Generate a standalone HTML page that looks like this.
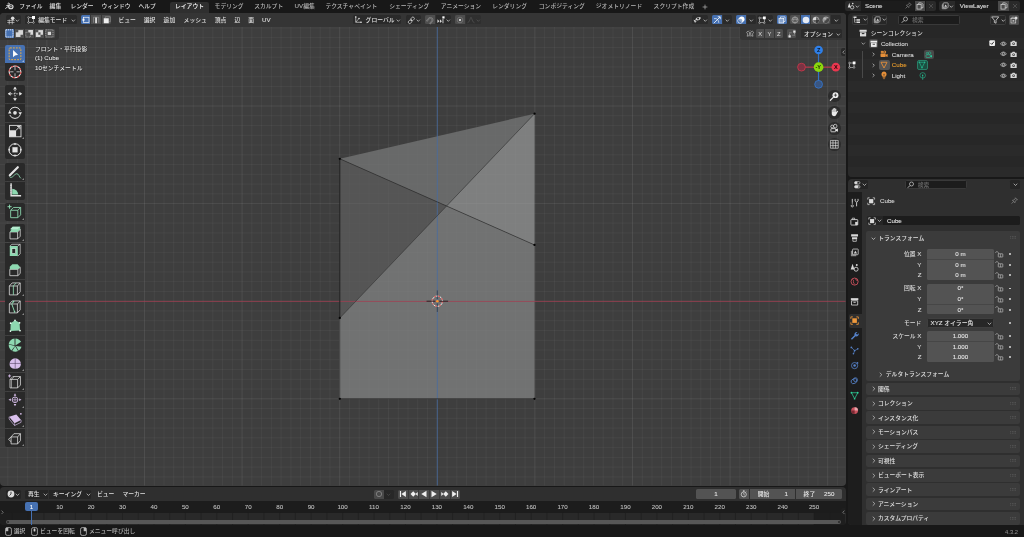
<!DOCTYPE html><html lang="ja"><head><meta charset="utf-8"><title>Blender</title><style>
*{box-sizing:border-box;margin:0;padding:0}
html,body{width:1024px;height:537px;overflow:hidden;background:#181818}
body{position:relative;font-family:"Liberation Sans","Noto Sans CJK JP",sans-serif;font-size:5.8px;color:#e0e0e0;line-height:1;font-weight:500}
.a{position:absolute}
.t{position:absolute;white-space:nowrap;line-height:8px;height:8px}
.l{font-size:6.2px;-webkit-text-stroke:0.08px currentColor}
.btn{position:absolute;background:#282828;border-radius:1.5px}
.fld{position:absolute;background:#545454;border-radius:1.5px;text-align:center;line-height:9px;color:#e6e6e6}
svg{position:absolute;overflow:visible}
</style></head><body><div id="root" class="a" style="left:0;top:0;width:1024px;height:537px;will-change:transform;opacity:0.9999">
<div class="a" id="vp" style="left:0px;top:13px;width:845.5px;height:472.5px;background:#3f3f3f;border-radius:4px;overflow:hidden">
<svg width="845.5" height="472.5" viewBox="0 13 845.5 472.5" style="left:0;top:0"><path d="M7.86 13V485.5M17.62 13V485.5M27.38 13V485.5M37.14 13V485.5M56.66 13V485.5M66.42 13V485.5M76.18 13V485.5M85.94 13V485.5M95.70 13V485.5M105.46 13V485.5M115.22 13V485.5M124.98 13V485.5M134.74 13V485.5M154.26 13V485.5M164.02 13V485.5M173.78 13V485.5M183.54 13V485.5M193.30 13V485.5M203.06 13V485.5M212.82 13V485.5M222.58 13V485.5M232.34 13V485.5M251.86 13V485.5M261.62 13V485.5M271.38 13V485.5M281.14 13V485.5M290.90 13V485.5M300.66 13V485.5M310.42 13V485.5M320.18 13V485.5M329.94 13V485.5M349.46 13V485.5M359.22 13V485.5M368.98 13V485.5M378.74 13V485.5M388.50 13V485.5M398.26 13V485.5M408.02 13V485.5M417.78 13V485.5M427.54 13V485.5M447.06 13V485.5M456.82 13V485.5M466.58 13V485.5M476.34 13V485.5M486.10 13V485.5M495.86 13V485.5M505.62 13V485.5M515.38 13V485.5M525.14 13V485.5M544.66 13V485.5M554.42 13V485.5M564.18 13V485.5M573.94 13V485.5M583.70 13V485.5M593.46 13V485.5M603.22 13V485.5M612.98 13V485.5M622.74 13V485.5M642.26 13V485.5M652.02 13V485.5M661.78 13V485.5M671.54 13V485.5M681.30 13V485.5M691.06 13V485.5M700.82 13V485.5M710.58 13V485.5M720.34 13V485.5M739.86 13V485.5M749.62 13V485.5M759.38 13V485.5M769.14 13V485.5M778.90 13V485.5M788.66 13V485.5M798.42 13V485.5M808.18 13V485.5M817.94 13V485.5M837.46 13V485.5M0 18.16H845.5M0 27.92H845.5M0 37.68H845.5M0 47.44H845.5M0 57.20H845.5M0 66.96H845.5M0 76.72H845.5M0 86.48H845.5M0 96.24H845.5M0 115.76H845.5M0 125.52H845.5M0 135.28H845.5M0 145.04H845.5M0 154.80H845.5M0 164.56H845.5M0 174.32H845.5M0 184.08H845.5M0 193.84H845.5M0 213.36H845.5M0 223.12H845.5M0 232.88H845.5M0 242.64H845.5M0 252.40H845.5M0 262.16H845.5M0 271.92H845.5M0 281.68H845.5M0 291.44H845.5M0 310.96H845.5M0 320.72H845.5M0 330.48H845.5M0 340.24H845.5M0 350.00H845.5M0 359.76H845.5M0 369.52H845.5M0 379.28H845.5M0 389.04H845.5M0 408.56H845.5M0 418.32H845.5M0 428.08H845.5M0 437.84H845.5M0 447.60H845.5M0 457.36H845.5M0 467.12H845.5M0 476.88H845.5" stroke="#fff" stroke-opacity="0.05" stroke-width="0.85" fill="none"/><path d="M46.90 13V485.5M144.50 13V485.5M242.10 13V485.5M339.70 13V485.5M437.30 13V485.5M534.90 13V485.5M632.50 13V485.5M730.10 13V485.5M827.70 13V485.5M0 106.00H845.5M0 203.60H845.5M0 301.20H845.5M0 398.80H845.5" stroke="#fff" stroke-opacity="0.085" stroke-width="0.95" fill="none"/><polygon points="339.80,158.80 534.60,113.70 446.57,206.02" fill="#696a6a"/><polygon points="339.80,158.80 446.57,206.02 339.80,318.00" fill="#565656"/><polygon points="534.60,113.70 534.50,244.90 446.57,206.02" fill="#7f8080"/><polygon points="339.80,318.00 446.57,206.02 534.50,244.90 534.50,398.80 339.80,398.80" fill="#727373"/><clipPath id="mc"><polygon points="339.80,158.80 534.60,113.70 534.50,244.90 534.50,398.80 339.80,398.80"/></clipPath><g clip-path="url(#mc)"><path d="M7.86 13V485.5M17.62 13V485.5M27.38 13V485.5M37.14 13V485.5M56.66 13V485.5M66.42 13V485.5M76.18 13V485.5M85.94 13V485.5M95.70 13V485.5M105.46 13V485.5M115.22 13V485.5M124.98 13V485.5M134.74 13V485.5M154.26 13V485.5M164.02 13V485.5M173.78 13V485.5M183.54 13V485.5M193.30 13V485.5M203.06 13V485.5M212.82 13V485.5M222.58 13V485.5M232.34 13V485.5M251.86 13V485.5M261.62 13V485.5M271.38 13V485.5M281.14 13V485.5M290.90 13V485.5M300.66 13V485.5M310.42 13V485.5M320.18 13V485.5M329.94 13V485.5M349.46 13V485.5M359.22 13V485.5M368.98 13V485.5M378.74 13V485.5M388.50 13V485.5M398.26 13V485.5M408.02 13V485.5M417.78 13V485.5M427.54 13V485.5M447.06 13V485.5M456.82 13V485.5M466.58 13V485.5M476.34 13V485.5M486.10 13V485.5M495.86 13V485.5M505.62 13V485.5M515.38 13V485.5M525.14 13V485.5M544.66 13V485.5M554.42 13V485.5M564.18 13V485.5M573.94 13V485.5M583.70 13V485.5M593.46 13V485.5M603.22 13V485.5M612.98 13V485.5M622.74 13V485.5M642.26 13V485.5M652.02 13V485.5M661.78 13V485.5M671.54 13V485.5M681.30 13V485.5M691.06 13V485.5M700.82 13V485.5M710.58 13V485.5M720.34 13V485.5M739.86 13V485.5M749.62 13V485.5M759.38 13V485.5M769.14 13V485.5M778.90 13V485.5M788.66 13V485.5M798.42 13V485.5M808.18 13V485.5M817.94 13V485.5M837.46 13V485.5M0 18.16H845.5M0 27.92H845.5M0 37.68H845.5M0 47.44H845.5M0 57.20H845.5M0 66.96H845.5M0 76.72H845.5M0 86.48H845.5M0 96.24H845.5M0 115.76H845.5M0 125.52H845.5M0 135.28H845.5M0 145.04H845.5M0 154.80H845.5M0 164.56H845.5M0 174.32H845.5M0 184.08H845.5M0 193.84H845.5M0 213.36H845.5M0 223.12H845.5M0 232.88H845.5M0 242.64H845.5M0 252.40H845.5M0 262.16H845.5M0 271.92H845.5M0 281.68H845.5M0 291.44H845.5M0 310.96H845.5M0 320.72H845.5M0 330.48H845.5M0 340.24H845.5M0 350.00H845.5M0 359.76H845.5M0 369.52H845.5M0 379.28H845.5M0 389.04H845.5M0 408.56H845.5M0 418.32H845.5M0 428.08H845.5M0 437.84H845.5M0 447.60H845.5M0 457.36H845.5M0 467.12H845.5M0 476.88H845.5" stroke="#fff" stroke-opacity="0.028" stroke-width="0.85" fill="none"/><path d="M46.90 13V485.5M144.50 13V485.5M242.10 13V485.5M339.70 13V485.5M437.30 13V485.5M534.90 13V485.5M632.50 13V485.5M730.10 13V485.5M827.70 13V485.5M0 106.00H845.5M0 203.60H845.5M0 301.20H845.5M0 398.80H845.5" stroke="#fff" stroke-opacity="0.05" stroke-width="0.95" fill="none"/></g><path d="M0 301.40H845.5" stroke="#a03c50" stroke-opacity="0.85" stroke-width="0.9"/><path d="M437.30 13V485.5" stroke="#456aa2" stroke-opacity="0.85" stroke-width="0.9"/><path d="M339.80,158.80L534.50,244.90" stroke="#222" stroke-width="0.55" fill="none"/><path d="M339.80,318.00L534.60,113.70" stroke="#333" stroke-width="0.55" fill="none"/><path d="M339.80,158.80L339.80,318.00" stroke="#1a1a1a" stroke-width="0.9" fill="none"/><path d="M339.80,318.00L339.80,398.80" stroke="#484848" stroke-width="0.9" fill="none"/><path d="M339.80,398.80L534.50,398.80" stroke="#333" stroke-width="0.9" fill="none"/><circle cx="339.80" cy="158.80" r="1.15" fill="#050505"/><circle cx="534.60" cy="113.70" r="1.15" fill="#050505"/><circle cx="534.50" cy="244.90" r="1.15" fill="#050505"/><circle cx="339.80" cy="318.00" r="1.15" fill="#050505"/><circle cx="339.80" cy="398.80" r="1.15" fill="#050505"/><circle cx="534.50" cy="398.80" r="1.15" fill="#050505"/><circle cx="437.3" cy="301.2" r="5.2" fill="none" stroke="#e8e8e8" stroke-width="1"/><circle cx="437.3" cy="301.2" r="5.2" fill="none" stroke="#e04848" stroke-width="1" stroke-dasharray="2.042 2.042"/><path d="M426.55 301.2h8.6M439.45 301.2h8.6" stroke="#151515" stroke-width="0.8"/><path d="M437.3 290.45v8.6M437.3 303.34999999999997v8.6" stroke="#151515" stroke-opacity="0.6" stroke-width="0.8"/><circle cx="437.3" cy="301.2" r="1.25" fill="#ff9a2e"/></svg>
<div class="a" style="left:0;top:0;width:100%;height:13.8px;background:#363636"></div>
<div class="a" style="left:0;top:13.8px;width:59.4px;height:13.3px;background:#363636;border-bottom-right-radius:3px"></div>
<div class="a" style="left:740px;top:13.8px;width:106px;height:13px;background:#363636;border-bottom-left-radius:3px"></div>
</div>
<div class="a" style="left:6.2px;top:15.2px;width:14.50px;height:9.30px;background:#2b2b2b;border-radius:1.5px;"></div>
<svg width="8.6" height="8.6" viewBox="0 0 16 16" style="left:7.4px;top:15.6px"><path d="M0.5 8.6H14M0.5 12.2H14M4.2 6.6V15.5M9.8 8V15.5" stroke="#dcdcdc" stroke-width="1.2" fill="none"/><circle cx="10.6" cy="4.4" r="3.3" fill="#dcdcdc"/></svg>
<svg width="4.6" height="3.2" viewBox="0 0 10 7" style="left:15.30px;top:18.60px"><path d="M1.4 1.4L5 5.2L8.6 1.4" stroke="#d0d0d0" stroke-width="1.6" fill="none"/></svg>
<div class="a" style="left:25.4px;top:15.2px;width:51.20px;height:9.30px;background:#2b2b2b;border-radius:1.5px;"></div>
<svg width="8" height="8" viewBox="0 0 16 16" style="left:27.2px;top:16px"><rect x="3" y="3" width="10" height="10" fill="none" stroke="#dcdcdc" stroke-width="1.1"/><circle cx="3" cy="3" r="1.7" fill="#2b2b2b" stroke="#dcdcdc" stroke-width="1"/><circle cx="3" cy="13" r="1.7" fill="#2b2b2b" stroke="#dcdcdc" stroke-width="1"/><circle cx="13" cy="13" r="1.7" fill="#2b2b2b" stroke="#dcdcdc" stroke-width="1"/><rect x="10" y="0" width="6" height="6" fill="#fff"/></svg>
<div class="t" style="left:38.2px;top:16.0px;">編集モード</div>
<svg width="4.6" height="3.2" viewBox="0 0 10 7" style="left:70.90px;top:18.60px"><path d="M1.4 1.4L5 5.2L8.6 1.4" stroke="#d0d0d0" stroke-width="1.6" fill="none"/></svg>
<div class="a" style="left:80.6px;top:15.2px;width:9.80px;height:9.30px;background:#4772b3;border-radius:1.5px 0 0 1.5px;"></div>
<div class="a" style="left:91px;top:15.2px;width:10.00px;height:9.30px;background:#4f4f4f;border-radius:0;"></div>
<div class="a" style="left:101.6px;top:15.2px;width:9.80px;height:9.30px;background:#4f4f4f;border-radius:0 1.5px 1.5px 0;"></div>
<svg width="8" height="8" viewBox="0 0 16 16" style="left:81.5px;top:16px"><rect x="3" y="2.5" width="11" height="10.5" fill="none" stroke="#fff" stroke-width="1.3"/><rect x="1" y="5.5" width="4" height="4" fill="#fff"/></svg>
<svg width="8" height="8" viewBox="0 0 16 16" style="left:92px;top:16px"><path d="M3 13.5V2.5H13.5V13.5" fill="none" stroke="#9a9a9a" stroke-width="1.2"/><rect x="6.6" y="3" width="3" height="11.5" fill="#fff"/></svg>
<svg width="8" height="8" viewBox="0 0 16 16" style="left:102.5px;top:16px"><path d="M4.5 4.5V1.5H14.5V11.5H11.5" fill="none" stroke="#9a9a9a" stroke-width="1.2"/><rect x="1.5" y="4.5" width="10" height="10" fill="#f0f0f0"/></svg>
<div class="t" style="left:118.4px;top:16.0px;color:#e0e0e0;">ビュー</div>
<div class="t" style="left:143.8px;top:16.0px;color:#e0e0e0;">選択</div>
<div class="t" style="left:163.6px;top:16.0px;color:#e0e0e0;">追加</div>
<div class="t" style="left:183.6px;top:16.0px;color:#e0e0e0;">メッシュ</div>
<div class="t" style="left:214.8px;top:16.0px;color:#e0e0e0;">頂点</div>
<div class="t" style="left:234.6px;top:16.0px;color:#e0e0e0;">辺</div>
<div class="t" style="left:248.2px;top:16.0px;color:#e0e0e0;">面</div>
<div class="t" style="left:262px;top:16.0px;color:#e0e0e0;"><span class="l">UV</span></div>
<div class="a" style="left:352.5px;top:15.2px;width:48.70px;height:9.30px;background:#2b2b2b;border-radius:1.5px;"></div>
<svg width="8" height="8" viewBox="0 0 16 16" style="left:354.2px;top:16px"><path d="M3.5 1V12.5H15" fill="none" stroke="#dcdcdc" stroke-width="1.4"/><path d="M3.5 12.5L10 5" stroke="#dcdcdc" stroke-width="1.2"/><circle cx="3.5" cy="2" r="1.6" fill="#dcdcdc"/><circle cx="14" cy="12.5" r="1.6" fill="#dcdcdc"/><circle cx="10" cy="5" r="1.6" fill="#dcdcdc"/></svg>
<div class="t" style="left:365.6px;top:16.0px;">グローバル</div>
<svg width="4.6" height="3.2" viewBox="0 0 10 7" style="left:396.10px;top:18.60px"><path d="M1.4 1.4L5 5.2L8.6 1.4" stroke="#d0d0d0" stroke-width="1.6" fill="none"/></svg>
<div class="a" style="left:405.5px;top:15.2px;width:15.50px;height:9.30px;background:#2b2b2b;border-radius:1.5px;"></div>
<svg width="8.6" height="8.6" viewBox="0 0 16 16" style="left:406.8px;top:15.8px"><rect x="6.9" y="2.5" width="7" height="5.4" rx="2.7" transform="rotate(-45 10.4 5.2)" fill="none" stroke="#dcdcdc" stroke-width="1.3"/><rect x="2.1" y="8.1" width="7" height="5.4" rx="2.7" transform="rotate(-45 5.6 10.8)" fill="none" stroke="#dcdcdc" stroke-width="1.3"/><circle cx="8" cy="8" r="1.3" fill="#dcdcdc"/></svg>
<svg width="4.6" height="3.2" viewBox="0 0 10 7" style="left:416.30px;top:18.60px"><path d="M1.4 1.4L5 5.2L8.6 1.4" stroke="#d0d0d0" stroke-width="1.6" fill="none"/></svg>
<div class="a" style="left:425px;top:15.2px;width:10.20px;height:9.30px;background:#4f4f4f;border-radius:1.5px 0 0 1.5px;"></div>
<svg width="8.4" height="8.4" viewBox="0 0 16 16" style="left:426px;top:15.8px"><g transform="rotate(40 8 8)"><path d="M4 14V7.5A4 4 0 0 1 12 7.5V14" fill="none" stroke="#8a8a8a" stroke-width="3"/><path d="M4 13.4V7.5A4 4 0 0 1 12 7.5V13.4" fill="none" stroke="#4f4f4f" stroke-width="1"/></g></svg>
<div class="a" style="left:435.5px;top:15.2px;width:15.80px;height:9.30px;background:#2b2b2b;border-radius:0 1.5px 1.5px 0;"></div>
<svg width="8.4" height="8.4" viewBox="0 0 16 16" style="left:436.6px;top:15.8px"><path d="M0.8 6.4L4.6 9.8L0.8 13.2ZM5.6 6.4L9.4 9.8L5.6 13.2Z" fill="#dcdcdc"/><path d="M11.4 5.8V13.8" stroke="#dcdcdc" stroke-width="1.7"/><rect x="10.2" y="0.6" width="4.2" height="4.2" fill="#fff"/></svg>
<svg width="4.6" height="3.2" viewBox="0 0 10 7" style="left:446.30px;top:18.60px"><path d="M1.4 1.4L5 5.2L8.6 1.4" stroke="#d0d0d0" stroke-width="1.6" fill="none"/></svg>
<div class="a" style="left:455px;top:15.2px;width:10.20px;height:9.30px;background:#4f4f4f;border-radius:1.5px 0 0 1.5px;"></div>
<svg width="8" height="8" viewBox="0 0 16 16" style="left:456.1px;top:16px"><circle cx="8" cy="8" r="5.6" fill="none" stroke="#8c8c8c" stroke-width="1.1"/><circle cx="8" cy="8" r="2.1" fill="#f0f0f0"/></svg>
<div class="a" style="left:465.5px;top:15.2px;width:15.80px;height:9.30px;background:#303030;border-radius:0 1.5px 1.5px 0;"></div>
<svg width="8" height="8" viewBox="0 0 16 16" style="left:466.5px;top:16px"><path d="M1 13.5C5.5 13.5 6.4 2.5 8 2.5S10.5 13.5 15 13.5" fill="none" stroke="#5a5a5a" stroke-width="1.2"/></svg>
<svg width="4.6" height="3.2" viewBox="0 0 10 7" style="left:476.10px;top:18.60px"><path d="M1.4 1.4L5 5.2L8.6 1.4" stroke="#555" stroke-width="1.6" fill="none"/></svg>
<div class="a" style="left:692.3px;top:15.2px;width:15.90px;height:9.30px;background:#2b2b2b;border-radius:1.5px;"></div>
<svg width="8.4" height="8" viewBox="0 0 17 16" style="left:693px;top:16px"><path d="M4 6Q10 -1 16.5 5Q11 12 4 6Z" fill="#dcdcdc" transform="rotate(-12 10 5)"/><circle cx="10.4" cy="4.8" r="2.1" fill="#2b2b2b"/><path d="M1 7.5L8 10.2L5.2 11.4L4.4 14.8Z" fill="#dcdcdc"/></svg>
<svg width="4.6" height="3.2" viewBox="0 0 10 7" style="left:703.10px;top:18.60px"><path d="M1.4 1.4L5 5.2L8.6 1.4" stroke="#d0d0d0" stroke-width="1.6" fill="none"/></svg>
<div class="a" style="left:712.1px;top:15.2px;width:10.20px;height:9.30px;background:#4772b3;border-radius:1.5px 0 0 1.5px;"></div>
<svg width="8" height="8" viewBox="0 0 16 16" style="left:713.2px;top:16px"><path d="M1.5 14.5L14 2" stroke="#fff" stroke-width="1.6"/><path d="M2 5.5C7 4 11 7 11.5 13.5" fill="none" stroke="#fff" stroke-width="1.4"/><path d="M9.5 1.5H14.5V6.5" fill="none" stroke="#fff" stroke-width="1.6"/></svg>
<div class="a" style="left:722.6px;top:15.2px;width:9.20px;height:9.30px;background:#2b2b2b;border-radius:0 1.5px 1.5px 0;"></div>
<svg width="4.6" height="3.2" viewBox="0 0 10 7" style="left:724.80px;top:18.60px"><path d="M1.4 1.4L5 5.2L8.6 1.4" stroke="#d0d0d0" stroke-width="1.6" fill="none"/></svg>
<div class="a" style="left:736px;top:15.2px;width:10.20px;height:9.30px;background:#4772b3;border-radius:1.5px 0 0 1.5px;"></div>
<svg width="8" height="8" viewBox="0 0 16 16" style="left:737px;top:16px"><circle cx="9.5" cy="6.5" r="5.5" fill="#fff"/><circle cx="6.5" cy="9.5" r="5" fill="none" stroke="#fff" stroke-width="1.5"/><circle cx="6.5" cy="9.5" r="4.2" fill="#4772b3" fill-opacity="0.55"/></svg>
<div class="a" style="left:746.5px;top:15.2px;width:9.30px;height:9.30px;background:#2b2b2b;border-radius:0 1.5px 1.5px 0;"></div>
<svg width="4.6" height="3.2" viewBox="0 0 10 7" style="left:748.90px;top:18.60px"><path d="M1.4 1.4L5 5.2L8.6 1.4" stroke="#d0d0d0" stroke-width="1.6" fill="none"/></svg>
<div class="a" style="left:757.1px;top:15.2px;width:15.60px;height:9.30px;background:#2b2b2b;border-radius:1.5px;"></div>
<svg width="8" height="8" viewBox="0 0 16 16" style="left:758px;top:16px"><rect x="3" y="4" width="9.5" height="9.5" fill="none" stroke="#dcdcdc" stroke-width="1.1"/><circle cx="3" cy="4" r="1.7" fill="#2b2b2b" stroke="#dcdcdc" stroke-width="1"/><circle cx="3" cy="13.5" r="1.7" fill="#2b2b2b" stroke="#dcdcdc" stroke-width="1"/><circle cx="12.5" cy="13.5" r="1.7" fill="#2b2b2b" stroke="#dcdcdc" stroke-width="1"/><rect x="10" y="1" width="5.5" height="5.5" fill="#fff"/></svg>
<svg width="4.6" height="3.2" viewBox="0 0 10 7" style="left:768.00px;top:18.60px"><path d="M1.4 1.4L5 5.2L8.6 1.4" stroke="#d0d0d0" stroke-width="1.6" fill="none"/></svg>
<div class="a" style="left:777.1px;top:15.2px;width:9.70px;height:9.30px;background:#4772b3;border-radius:1.5px;"></div>
<svg width="8" height="8" viewBox="0 0 16 16" style="left:778px;top:16px"><path d="M5 4.5V1.8H14.2V11H11.5" fill="none" stroke="#fff" stroke-width="1.3"/><rect x="2" y="4.6" width="9.4" height="9.4" fill="#fff" fill-opacity="0.35" stroke="#fff" stroke-width="1.3"/></svg>
<div class="a" style="left:790.4px;top:15.2px;width:9.90px;height:9.30px;background:#4f4f4f;border-radius:1.5px 0 0 1.5px;"></div>
<div class="a" style="left:800.6px;top:15.2px;width:9.90px;height:9.30px;background:#4772b3;border-radius:0;"></div>
<div class="a" style="left:810.8px;top:15.2px;width:9.80px;height:9.30px;background:#4f4f4f;border-radius:0;"></div>
<div class="a" style="left:820.9px;top:15.2px;width:9.60px;height:9.30px;background:#4f4f4f;border-radius:0 1.5px 1.5px 0;"></div>
<svg width="8" height="8" viewBox="0 0 16 16" style="left:791.4px;top:16px"><circle cx="8" cy="8" r="6.2" fill="none" stroke="#c4c4c4" stroke-width="1.1"/><ellipse cx="8" cy="8" rx="2.6" ry="6.2" fill="none" stroke="#c4c4c4" stroke-width="0.9"/><path d="M2 6.5H14" stroke="#c4c4c4" stroke-width="0.9"/></svg>
<svg width="8" height="8" viewBox="0 0 16 16" style="left:801.5px;top:16px"><circle cx="8" cy="8" r="6.6" fill="#e6ecf6"/></svg>
<svg width="8" height="8" viewBox="0 0 16 16" style="left:811.7px;top:16px"><circle cx="8" cy="8" r="6.2" fill="#6a6a6a" stroke="#c8c8c8" stroke-width="1.1"/><path d="M8 1.8A6.2 6.2 0 0 0 1.8 8H8Z" fill="#d8d8d8"/><path d="M8 8H14.2A6.2 6.2 0 0 1 8 14.2Z" fill="#3c3c3c"/></svg>
<svg width="8" height="8" viewBox="0 0 16 16" style="left:821.8px;top:16px"><circle cx="8" cy="8" r="6.2" fill="#8a8a8a" stroke="#c8c8c8" stroke-width="1.1"/><path d="M3.6 12.4A6.2 6.2 0 0 0 12.4 3.6Z" fill="#4a4a4a"/><circle cx="6" cy="5.5" r="1.8" fill="#d8d8d8" fill-opacity="0.7"/></svg>
<div class="a" style="left:830.8px;top:15.2px;width:9.90px;height:9.30px;background:#2b2b2b;border-radius:0 1.5px 1.5px 0;"></div>
<svg width="4.6" height="3.2" viewBox="0 0 10 7" style="left:833.70px;top:18.60px"><path d="M1.4 1.4L5 5.2L8.6 1.4" stroke="#d0d0d0" stroke-width="1.6" fill="none"/></svg>
<div class="a" style="left:4.8px;top:29.1px;width:9.30px;height:9.40px;background:#4772b3;border-radius:1.5px 0 0 1.5px;"></div>
<div class="a" style="left:14.8px;top:29.1px;width:9.40px;height:9.40px;background:#4f4f4f;border-radius:0;"></div>
<div class="a" style="left:24.9px;top:29.1px;width:9.40px;height:9.40px;background:#4f4f4f;border-radius:0;"></div>
<div class="a" style="left:35px;top:29.1px;width:9.40px;height:9.40px;background:#4f4f4f;border-radius:0;"></div>
<div class="a" style="left:45.1px;top:29.1px;width:9.50px;height:9.40px;background:#4f4f4f;border-radius:0 1.5px 1.5px 0;"></div>
<svg width="8.8" height="8.8" viewBox="0 0 16 16" style="left:5.05px;top:29.4px"><rect x="1.5" y="1.5" width="13" height="13" fill="none" stroke="#fff" stroke-width="1.6" stroke-dasharray="2.2 1.4"/></svg>
<svg width="8.8" height="8.8" viewBox="0 0 16 16" style="left:15.1px;top:29.4px"><rect x="6" y="2" width="8.5" height="8.5" fill="#d8d8d8"/><rect x="1.5" y="6" width="8.5" height="8.5" fill="#d8d8d8"/></svg>
<svg width="8.8" height="8.8" viewBox="0 0 16 16" style="left:25.2px;top:29.4px"><rect x="1.5" y="6" width="8.5" height="8.5" fill="none" stroke="#bbb" stroke-width="1.2" stroke-dasharray="1.6 1.4"/><path d="M6 2H14.5V10.5H10V6H6Z" fill="#d8d8d8"/></svg>
<svg width="8.8" height="8.8" viewBox="0 0 16 16" style="left:35.3px;top:29.4px"><rect x="6" y="2" width="8.5" height="8.5" fill="#d8d8d8"/><rect x="1.5" y="6" width="8.5" height="8.5" fill="#d8d8d8"/><rect x="6" y="6" width="4" height="4.5" fill="#545454"/></svg>
<svg width="8.8" height="8.8" viewBox="0 0 16 16" style="left:45.4px;top:29.4px"><rect x="1.5" y="1.5" width="13" height="13" fill="none" stroke="#bbb" stroke-width="1.3" stroke-dasharray="1.8 1.6"/><rect x="5" y="5" width="6" height="6" fill="#d8d8d8"/></svg>
<svg width="8.2" height="8" viewBox="0 0 16 16" style="left:746.2px;top:29.6px"><path d="M6.6 4.5L4 2L1 4.5L3.2 8L2.2 12.5L6.6 11ZM9.4 4.5L12 2L15 4.5L12.8 8L13.8 12.5L9.4 11Z" fill="none" stroke="#c8c8c8" stroke-width="1.2" stroke-linejoin="round"/><path d="M8 0.5V15.5" stroke="#c8c8c8" stroke-width="1" stroke-dasharray="1.6 1.4"/></svg>
<div class="a" style="left:755.8px;top:29.0px;width:8.60px;height:9.00px;background:#4f4f4f;border-radius:1.5px 0 0 1.5px;"></div>
<div class="a" style="left:765.3px;top:29.0px;width:8.40px;height:9.00px;background:#4f4f4f;border-radius:0;"></div>
<div class="a" style="left:774.6px;top:29.0px;width:8.30px;height:9.00px;background:#4f4f4f;border-radius:0 1.5px 1.5px 0;"></div>
<div class="t" style="left:758.3px;top:29.7px;">X</div>
<div class="t" style="left:767.6px;top:29.7px;">Y</div>
<div class="t" style="left:776.9px;top:29.7px;">Z</div>
<div class="a" style="left:786.8px;top:29.0px;width:9.40px;height:9.00px;background:#4f4f4f;border-radius:1.5px;"></div>
<svg width="8" height="8" viewBox="0 0 16 16" style="left:787.5px;top:29.6px"><path d="M3 10V5.5H7.5M13 6V10.5H8.5" fill="none" stroke="#c8c8c8" stroke-width="1.2" stroke-dasharray="2 1.2"/><rect x="1" y="10.5" width="4.5" height="4.5" fill="#e8e8e8"/><rect x="10.5" y="1" width="4.5" height="4.5" fill="#e8e8e8"/></svg>
<div class="a" style="left:800.5px;top:29.0px;width:41.00px;height:9.00px;background:#2b2b2b;border-radius:1.5px;"></div>
<div class="t" style="left:804px;top:29.7px;">オプション</div>
<svg width="4.6" height="3.2" viewBox="0 0 10 7" style="left:835.90px;top:32.70px"><path d="M1.4 1.4L5 5.2L8.6 1.4" stroke="#d0d0d0" stroke-width="1.6" fill="none"/></svg>
<div class="t" style="left:35px;top:45px;color:#f2f2f2;text-shadow:0 0 1px #000,0 0.4px 1px rgba(0,0,0,.8);">フロント・平行投影</div>
<div class="t" style="left:35px;top:54.3px;color:#f2f2f2;text-shadow:0 0 1px #000,0 0.4px 1px rgba(0,0,0,.8);"><span class="l">(1) Cube</span></div>
<div class="t" style="left:35px;top:63.8px;color:#f2f2f2;text-shadow:0 0 1px #000,0 0.4px 1px rgba(0,0,0,.8);"><span class="l">10</span>センチメートル</div>
<svg width="846" height="537" viewBox="0 0 846 537" style="left:0;top:0"><path d="M818.6 50V84.3" stroke="#2f7fe6" stroke-width="0.9"/><path d="M801.5 67.15H835.8" stroke="#e0384e" stroke-width="0.9"/><circle cx="801.5" cy="67.15" r="3.9" fill="#7c3444" stroke="#d0384c" stroke-width="0.8"/><circle cx="818.6" cy="84.3" r="3.9" fill="#3b5782" stroke="#3478d6" stroke-width="0.8"/><circle cx="818.6" cy="50.05" r="4.3" fill="#2f80ea"/><circle cx="835.8" cy="67.15" r="4.3" fill="#ea3850"/><circle cx="818.6" cy="67.15" r="4.8" fill="#8bd80e"/><text x="818.6" y="52.1" font-size="5.6" text-anchor="middle" fill="#101820" font-family="Liberation Sans,sans-serif" font-weight="bold">Z</text><text x="835.8" y="69.2" font-size="5.6" text-anchor="middle" fill="#200808" font-family="Liberation Sans,sans-serif" font-weight="bold">X</text><text x="818.3000000000001" y="69.2" font-size="5.6" text-anchor="middle" fill="#182000" font-family="Liberation Sans,sans-serif" font-weight="bold">-Y</text></svg>
<div class="a" style="left:840.6px;top:48px;width:4.90px;height:7.50px;background:#2a2a2a;border-radius:2px 0 0 2px;"></div>
<svg width="3" height="4.4" viewBox="0 0 6 9" style="left:842px;top:49.6px"><path d="M5 1L1.5 4.5L5 8" fill="none" stroke="#c0c0c0" stroke-width="1.4"/></svg>
<div class="a" style="left:828.20px;top:89.50px;width:12.8px;height:12.8px;border-radius:50%;background:#2d2d2d"></div>
<div class="a" style="left:828.20px;top:106.00px;width:12.8px;height:12.8px;border-radius:50%;background:#2d2d2d"></div>
<div class="a" style="left:828.20px;top:122.30px;width:12.8px;height:12.8px;border-radius:50%;background:#2d2d2d"></div>
<div class="a" style="left:828.20px;top:138.30px;width:12.8px;height:12.8px;border-radius:50%;background:#2d2d2d"></div>
<svg width="10.6" height="10.6" viewBox="0 0 20 20" style="left:829.3000000000001px;top:90.60000000000001px"><circle cx="12.2" cy="7.8" r="5.6" fill="#ececec"/><path d="M8 12L2.6 17.4" stroke="#ececec" stroke-width="2.4" stroke-linecap="round"/><path d="M12.2 4.8V10.8M9.2 7.8H15.2" stroke="#2d2d2d" stroke-width="1.4"/></svg>
<svg width="10.6" height="10.6" viewBox="0 0 20 20" style="left:829.3000000000001px;top:107.10000000000001px"><path d="M5.2 10.5V6Q5.2 4.9 6.2 4.9T7.2 6V3.6Q7.2 2.5 8.3 2.5T9.4 3.6V3Q9.4 1.9 10.5 1.9T11.6 3V3.8Q11.6 2.9 12.7 2.9T13.8 3.9V9.4L15.6 7.4Q16.6 6.6 17.4 7.6L14.4 13.2Q13 17.6 9.6 17.6Q6.2 17.6 5.2 13.6Z" fill="#ececec"/><path d="M7.2 6V9.5M9.4 3.6V9.5M11.6 3.8V9.5" stroke="#2d2d2d" stroke-width="0.5"/></svg>
<svg width="10.6" height="10.6" viewBox="0 0 20 20" style="left:829.3000000000001px;top:123.39999999999999px"><rect x="3.6" y="10.6" width="9" height="6" rx="1" fill="none" stroke="#ececec" stroke-width="1.5"/><path d="M12.6 12.4L16.8 10.6V16.6L12.6 14.8Z" fill="#ececec"/><circle cx="6" cy="6.6" r="2.7" fill="none" stroke="#ececec" stroke-width="1.3"/><circle cx="11.8" cy="5.8" r="3.3" fill="none" stroke="#ececec" stroke-width="1.3"/></svg>
<svg width="10.6" height="10.6" viewBox="0 0 20 20" style="left:829.3000000000001px;top:139.39999999999998px"><path d="M2.6 2.6H17.4V17.4H2.6ZM2.6 7.5H17.4M2.6 12.5H17.4M7.5 2.6V17.4M12.5 2.6V17.4" fill="none" stroke="#ececec" stroke-width="1.2"/></svg><div class="a" style="left:4.9px;top:44.9px;width:20.0px;height:18.00px;background:#4772b3;border-radius:2px 2px 0 0"></div>
<div class="a" style="left:4.9px;top:63.4px;width:20.0px;height:18.00px;background:#2a2a2a;border-radius:0 0 2px 2px"></div>
<div class="a" style="left:4.9px;top:85.4px;width:20.0px;height:18.10px;background:#2a2a2a;border-radius:2px 2px 0 0"></div>
<div class="a" style="left:4.9px;top:104.0px;width:20.0px;height:18.10px;background:#2a2a2a;border-radius:0"></div>
<div class="a" style="left:4.9px;top:122.6px;width:20.0px;height:18.10px;background:#2a2a2a;border-radius:0"></div>
<div class="a" style="left:4.9px;top:141.2px;width:20.0px;height:18.00px;background:#2a2a2a;border-radius:0 0 2px 2px"></div>
<div class="a" style="left:4.9px;top:163px;width:20.0px;height:18.10px;background:#2a2a2a;border-radius:2px 2px 0 0"></div>
<div class="a" style="left:4.9px;top:181.6px;width:20.0px;height:18.00px;background:#2a2a2a;border-radius:0 0 2px 2px"></div>
<div class="a" style="left:4.9px;top:203.3px;width:20.0px;height:18.00px;background:#2a2a2a;border-radius:2px"></div>
<div class="a" style="left:4.9px;top:223.9px;width:20.0px;height:18.10px;background:#2a2a2a;border-radius:2px 2px 0 0"></div>
<div class="a" style="left:4.9px;top:242.5px;width:20.0px;height:18.20px;background:#2a2a2a;border-radius:0"></div>
<div class="a" style="left:4.9px;top:261.2px;width:20.0px;height:18.10px;background:#2a2a2a;border-radius:0"></div>
<div class="a" style="left:4.9px;top:279.8px;width:20.0px;height:18.10px;background:#2a2a2a;border-radius:0"></div>
<div class="a" style="left:4.9px;top:298.4px;width:20.0px;height:18.20px;background:#2a2a2a;border-radius:0"></div>
<div class="a" style="left:4.9px;top:317.1px;width:20.0px;height:18.10px;background:#2a2a2a;border-radius:0"></div>
<div class="a" style="left:4.9px;top:335.7px;width:20.0px;height:18.10px;background:#2a2a2a;border-radius:0"></div>
<div class="a" style="left:4.9px;top:354.3px;width:20.0px;height:18.20px;background:#2a2a2a;border-radius:0"></div>
<div class="a" style="left:4.9px;top:373px;width:20.0px;height:18.10px;background:#2a2a2a;border-radius:0"></div>
<div class="a" style="left:4.9px;top:391.6px;width:20.0px;height:18.10px;background:#2a2a2a;border-radius:0"></div>
<div class="a" style="left:4.9px;top:410.2px;width:20.0px;height:18.20px;background:#2a2a2a;border-radius:0"></div>
<div class="a" style="left:4.9px;top:428.9px;width:20.0px;height:18.00px;background:#2a2a2a;border-radius:0 0 2px 2px"></div>
<svg width="20" height="18" viewBox="0.8 0.9 18.4 16.56" style="left:4.9px;top:44.70px"><rect x="4.6" y="3.6" width="10.8" height="10.8" rx="0.8" fill="none" stroke="#f0b040" stroke-width="0.9" stroke-dasharray="1.7 1"/><path d="M8.2 5.6V12.2L10 10.6L12.8 9.8Z" fill="#fff"/></svg>
<svg width="20" height="18" viewBox="0.8 0.9 18.4 16.56" style="left:4.9px;top:63.20px"><circle cx="10" cy="9" r="5.4" fill="none" stroke="#f0f0f0" stroke-width="1"/><circle cx="10" cy="9" r="5.4" fill="none" stroke="#e04a4a" stroke-width="1" stroke-dasharray="2.1 2.1"/><path d="M10 4.6V7.6M10 10.4V13.4M5.6 9H8.6M11.4 9H14.4" stroke="#e4e4e4" stroke-width="0.7"/></svg>
<svg width="20" height="18" viewBox="0.8 0.9 18.4 16.56" style="left:4.9px;top:85.20px"><path d="M10 3V15M4 9H16" stroke="#e4e4e4" stroke-width="0.9" stroke-dasharray="1.2 1.2"/><path d="M10 2.4L11.8 5H8.2ZM10 15.6L11.8 13H8.2ZM3.4 9L6 7.2V10.8ZM16.6 9L14 7.2V10.8Z" fill="#e4e4e4"/></svg>
<svg width="20" height="18" viewBox="0.8 0.9 18.4 16.56" style="left:4.9px;top:103.80px"><path d="M5.2 7A5.2 5.2 0 0 1 14.8 7M14.8 11A5.2 5.2 0 0 1 5.2 11" fill="none" stroke="#e4e4e4" stroke-width="0.9"/><path d="M3.6 9.6L5.2 6.8L6.8 9.6ZM16.4 8.4L14.8 11.2L13.2 8.4Z" fill="#e4e4e4"/><circle cx="10" cy="9" r="1.7" fill="#e4e4e4"/></svg>
<svg width="20" height="18" viewBox="0.8 0.9 18.4 16.56" style="left:4.9px;top:122.40px"><rect x="5" y="4" width="10.5" height="10.5" fill="none" stroke="#e4e4e4" stroke-width="0.8"/><rect x="5" y="8.5" width="6" height="6" fill="#e4e4e4"/><path d="M11 8.5L14.2 5.3M12 5H14.5V7.5" fill="none" stroke="#e4e4e4" stroke-width="0.9"/></svg>
<svg width="20" height="18" viewBox="0.8 0.9 18.4 16.56" style="left:4.9px;top:141.00px"><circle cx="10" cy="9" r="5.6" fill="none" stroke="#e4e4e4" stroke-width="0.9"/><rect x="7.6" y="6.6" width="4.8" height="4.8" fill="#e4e4e4"/><path d="M10 2.6L11.2 4.4H8.8ZM10 15.4L11.2 13.6H8.8ZM3.6 9L5.4 7.8V10.2ZM16.4 9L14.6 7.8V10.2Z" fill="#e4e4e4"/></svg>
<svg width="20" height="18" viewBox="0.8 0.9 18.4 16.56" style="left:4.9px;top:162.80px"><path d="M5.2 12.2L12.6 4.8" stroke="#e4e4e4" stroke-width="2" stroke-linecap="round"/><path d="M4.6 13.4L5.4 11.4L6.6 12.6Z" fill="#e4e4e4"/><path d="M5.2 13.8C7.4 15.6 9.4 10.8 11.6 10.8S13.6 13.8 15.4 15" fill="none" stroke="#8fdab2" stroke-width="0.8"/></svg>
<svg width="20" height="18" viewBox="0.8 0.9 18.4 16.56" style="left:4.9px;top:181.40px"><path d="M6.4 3V14.4H15.6" fill="none" stroke="#e4e4e4" stroke-width="1.3"/><path d="M7.4 13.4V8A5.6 5.6 0 0 1 13 13.4Z" fill="#8fdab2"/><path d="M5.4 5H7M5.4 7.2H7M5.4 9.4H7M5.4 11.6H7" stroke="#e4e4e4" stroke-width="0.5"/></svg>
<svg width="20" height="18" viewBox="0.8 0.9 18.4 16.56" style="left:4.9px;top:203.10px"><path d="M6 7.6H12.6V14.4H6ZM6 7.6L8.6 5H15.2L12.6 7.6M15.2 5V11.8L12.6 14.4" fill="none" stroke="#8fdab2" stroke-width="0.8"/><path d="M5 2.4V6.2M3.1 4.3H6.9" stroke="#8fdab2" stroke-width="0.9"/></svg>
<svg width="20" height="18" viewBox="0.8 0.9 18.4 16.56" style="left:4.9px;top:223.70px"><path d="M5.4 8.2H12.4V14.6H5.4ZM12.4 8.2L14.8 5.8V12.2L12.4 14.6" fill="none" stroke="#e4e4e4" stroke-width="0.7"/><path d="M5.4 8.2L7.8 3.4H14.8V5.8L12.4 8.2Z" fill="#8fdab2"/><path d="M5.4 5.8L7.8 3.4H14.8L12.4 5.8Z" fill="#b6ecd0"/></svg>
<svg width="20" height="18" viewBox="0.8 0.9 18.4 16.56" style="left:4.9px;top:242.30px"><path d="M5.2 4.6H12.6V13.8H5.2Z" fill="#8fdab2"/><rect x="7.2" y="7" width="3.4" height="4.4" fill="#2a2a2a" stroke="#e8fff2" stroke-width="0.5"/><path d="M5.2 4.6L7.2 3H14.8L12.6 4.6M14.8 3V11.8L12.6 13.8" fill="none" stroke="#e4e4e4" stroke-width="0.6"/></svg>
<svg width="20" height="18" viewBox="0.8 0.9 18.4 16.56" style="left:4.9px;top:261.00px"><path d="M5.2 8.6H12.6V14.4H5.2ZM12.6 8.6L14.8 6.6V12.4L12.6 14.4" fill="none" stroke="#e4e4e4" stroke-width="0.7"/><path d="M5.2 8.6V6.2L7.6 3.8H12.4L14.8 6.6L12.6 8.6Z" fill="#8fdab2"/></svg>
<svg width="20" height="18" viewBox="0.8 0.9 18.4 16.56" style="left:4.9px;top:279.60px"><path d="M4.8 6.4H12.2V14.6H4.8ZM4.8 6.4L7.4 3.6H14.8L12.2 6.4M14.8 3.6V11.8L12.2 14.6" fill="none" stroke="#e4e4e4" stroke-width="0.7"/><path d="M8.5 14.6V6.4L11.1 3.6" fill="none" stroke="#8fdab2" stroke-width="0.8"/></svg>
<svg width="20" height="18" viewBox="0.8 0.9 18.4 16.56" style="left:4.9px;top:298.20px"><path d="M4.8 6.4H12.2V14.6H4.8ZM4.8 6.4L7.4 3.6H14.8L12.2 6.4M14.8 3.6V11.8L12.2 14.6" fill="none" stroke="#e4e4e4" stroke-width="0.7"/><path d="M8.6 4.2L7 6.4L9.6 13.6" fill="none" stroke="#8fdab2" stroke-width="0.9"/><circle cx="8.6" cy="4.2" r="0.8" fill="#8fdab2"/><circle cx="9.6" cy="13.6" r="0.8" fill="#8fdab2"/></svg>
<svg width="20" height="18" viewBox="0.8 0.9 18.4 16.56" style="left:4.9px;top:316.90px"><path d="M6 6.6L10 4L14.2 6.2L14.6 13.4L5.8 13.8Z" fill="#8fdab2"/><circle cx="6" cy="6.6" r="0.8" fill="#e8fff2"/><circle cx="10" cy="4" r="0.8" fill="#e8fff2"/><circle cx="14.2" cy="6.2" r="0.8" fill="#e8fff2"/><circle cx="14.6" cy="13.4" r="0.8" fill="#e8fff2"/><circle cx="5.8" cy="13.8" r="0.8" fill="#e8fff2"/></svg>
<svg width="20" height="18" viewBox="0.8 0.9 18.4 16.56" style="left:4.9px;top:335.50px"><path d="M10.4 9.6V3.2A6.4 6.4 0 0 1 15.6 6.2ZM10.4 9.6L4.2 8.2A6.4 6.4 0 0 1 9.6 3.2V9.4ZM10 10L4.2 8.8A6.2 6.2 0 0 0 6.8 14.2ZM10.2 10.4L7.4 14.6A6.2 6.2 0 0 0 12.8 14.8ZM10.8 10L13.4 14.4A6.2 6.2 0 0 0 16 10.8Z" fill="#8fdab2"/></svg>
<svg width="20" height="18" viewBox="0.8 0.9 18.4 16.56" style="left:4.9px;top:354.10px"><path d="M5 10A5.2 5.2 0 0 1 15.4 10Q15.4 14.4 10.2 14.4T5 10Z" fill="#d9c0ec"/><path d="M5 9.6H15.4M10.2 4.8V14.4" stroke="#4a3a58" stroke-width="0.5"/></svg>
<svg width="20" height="18" viewBox="0.8 0.9 18.4 16.56" style="left:4.9px;top:372.80px"><path d="M5.4 6.8H12.4V14.6H5.4ZM5.4 6.8L8 4.2H15L12.4 6.8M15 4.2V12L12.4 14.6" fill="none" stroke="#e4e4e4" stroke-width="0.7"/><path d="M6.8 14.6V6.8L9.4 4.2" fill="none" stroke="#e4e4e4" stroke-width="0.5"/><path d="M5 2.2V5M3.6 3.6H6.4" stroke="#d9c0ec" stroke-width="0.8"/></svg>
<svg width="20" height="18" viewBox="0.8 0.9 18.4 16.56" style="left:4.9px;top:391.40px"><circle cx="10" cy="9" r="2.6" fill="none" stroke="#d9c0ec" stroke-width="0.8"/><path d="M7.4 9H12.6M10 6.4V11.6" stroke="#d9c0ec" stroke-width="0.6"/><path d="M10 3L11.2 5.2H8.8ZM10 15L11.2 12.8H8.8ZM4 9L6.2 7.8V10.2ZM16 9L13.8 7.8V10.2Z" fill="#d9c0ec"/></svg>
<svg width="20" height="18" viewBox="0.8 0.9 18.4 16.56" style="left:4.9px;top:410.00px"><path d="M4.6 7.2L11.2 5L15.6 10.2L9.6 13.2Z" fill="#d9c0ec"/><path d="M4.6 7.2V9.2L9.6 15.2V13.2M9.6 15.2L15.6 12.2V10.2" fill="none" stroke="#d9c0ec" stroke-width="0.6"/><circle cx="15.4" cy="4.4" r="0.8" fill="#d9c0ec"/></svg>
<svg width="20" height="18" viewBox="0.8 0.9 18.4 16.56" style="left:4.9px;top:428.70px"><path d="M6.4 8.2H12.4V14.6H6.4ZM6.4 8.2L9 5.2H15L12.4 8.2M15 5.2V11.6L12.4 14.6" fill="none" stroke="#e4e4e4" stroke-width="0.7"/><path d="M6.4 8.2L4 10.4L6.4 12.6" fill="none" stroke="#e4e4e4" stroke-width="0.7"/></svg>
<svg width="2" height="2" viewBox="0 0 2 2" style="left:22.0px;top:59.5px"><path d="M2 0V2H0Z" fill="#9db8e0"/></svg>
<svg width="2" height="2" viewBox="0 0 2 2" style="left:22.0px;top:137.2px"><path d="M2 0V2H0Z" fill="#8a8a8a"/></svg>
<svg width="2" height="2" viewBox="0 0 2 2" style="left:22.0px;top:177.6px"><path d="M2 0V2H0Z" fill="#8a8a8a"/></svg>
<svg width="2" height="2" viewBox="0 0 2 2" style="left:22.0px;top:217.9px"><path d="M2 0V2H0Z" fill="#8a8a8a"/></svg>
<svg width="2" height="2" viewBox="0 0 2 2" style="left:22.0px;top:238.5px"><path d="M2 0V2H0Z" fill="#8a8a8a"/></svg>
<svg width="2" height="2" viewBox="0 0 2 2" style="left:22.0px;top:294.4px"><path d="M2 0V2H0Z" fill="#8a8a8a"/></svg>
<svg width="2" height="2" viewBox="0 0 2 2" style="left:22.0px;top:313.0px"><path d="M2 0V2H0Z" fill="#8a8a8a"/></svg>
<svg width="2" height="2" viewBox="0 0 2 2" style="left:22.0px;top:368.9px"><path d="M2 0V2H0Z" fill="#8a8a8a"/></svg>
<svg width="2" height="2" viewBox="0 0 2 2" style="left:22.0px;top:387.6px"><path d="M2 0V2H0Z" fill="#8a8a8a"/></svg>
<svg width="2" height="2" viewBox="0 0 2 2" style="left:22.0px;top:406.2px"><path d="M2 0V2H0Z" fill="#8a8a8a"/></svg>
<svg width="2" height="2" viewBox="0 0 2 2" style="left:22.0px;top:424.8px"><path d="M2 0V2H0Z" fill="#8a8a8a"/></svg>
<svg width="2" height="2" viewBox="0 0 2 2" style="left:22.0px;top:443.5px"><path d="M2 0V2H0Z" fill="#8a8a8a"/></svg>
<div class="a" id="ol" style="left:847.5px;top:13px;width:176.5px;height:163.5px;background:#282828;border-radius:4px 0 0 4px;overflow:hidden">
<div class="a" style="left:0.00px;top:24.85px;width:176.50px;height:10.75px;background:#2b2b2b;border-radius:0;"></div>
<div class="a" style="left:0.00px;top:46.35px;width:176.50px;height:10.75px;background:#2b2b2b;border-radius:0;"></div>
<div class="a" style="left:0.00px;top:67.85px;width:176.50px;height:10.75px;background:#2b2b2b;border-radius:0;"></div>
<div class="a" style="left:0.00px;top:89.35px;width:176.50px;height:10.75px;background:#2b2b2b;border-radius:0;"></div>
<div class="a" style="left:0.00px;top:110.85px;width:176.50px;height:10.75px;background:#2b2b2b;border-radius:0;"></div>
<div class="a" style="left:0.00px;top:132.35px;width:176.50px;height:10.75px;background:#2b2b2b;border-radius:0;"></div>
<div class="a" style="left:0.00px;top:153.85px;width:176.50px;height:10.75px;background:#2b2b2b;border-radius:0;"></div>
<div class="a" style="left:4.20px;top:2.00px;width:16.20px;height:9.50px;background:#282828;border-radius:1.5px;border:0.5px solid #3c3c3c"></div>
<svg width="8" height="8" viewBox="0 0 16 16" style="left:5.70px;top:2.60px"><rect x="1" y="1" width="6" height="3" fill="#dcdcdc"/><path d="M3 4V12.5H7M3 8H7" fill="none" stroke="#dcdcdc" stroke-width="1.1"/><rect x="7" y="6.4" width="7" height="3" fill="#dcdcdc"/><rect x="7" y="11" width="7" height="3" fill="#dcdcdc"/></svg>
<svg width="4.6" height="3.2" viewBox="0 0 10 7" style="left:15.00px;top:5.20px"><path d="M1.4 1.4L5 5.2L8.6 1.4" stroke="#d0d0d0" stroke-width="1.6" fill="none"/></svg>
<div class="a" style="left:24.50px;top:2.00px;width:15.20px;height:9.50px;background:#282828;border-radius:1.5px;border:0.5px solid #3c3c3c"></div>
<svg width="8" height="8" viewBox="0 0 16 16" style="left:25.70px;top:2.60px"><rect x="1.5" y="4.5" width="10" height="10" rx="1.5" fill="#8a8a8a"/><rect x="4.3" y="1.7" width="10" height="10" rx="1.5" fill="#262626" stroke="#dcdcdc" stroke-width="1.3"/><path d="M6.5 9.5L9.3 4.8L12.2 9.5Z" fill="#dcdcdc"/></svg>
<svg width="4.6" height="3.2" viewBox="0 0 10 7" style="left:34.40px;top:5.20px"><path d="M1.4 1.4L5 5.2L8.6 1.4" stroke="#d0d0d0" stroke-width="1.6" fill="none"/></svg>
<div class="a" style="left:50.40px;top:2.00px;width:62.50px;height:9.50px;background:#1d1d1d;border-radius:1.5px;border:0.5px solid #3a3a3a"></div>
<svg width="7.5" height="7.5" viewBox="0 0 15 15" style="left:53.90px;top:2.80px"><circle cx="9" cy="6" r="4" fill="none" stroke="#c8c8c8" stroke-width="1.5"/><path d="M6 9L1.5 13.5" stroke="#c8c8c8" stroke-width="1.8"/></svg>
<div class="t" style="left:64.50px;top:2.60px;color:#6a6a6a;">検索</div>
<div class="a" style="left:142.00px;top:2.00px;width:16.10px;height:9.50px;background:#282828;border-radius:1.5px;border:0.5px solid #3c3c3c"></div>
<svg width="8.4" height="8" viewBox="0 0 16 15" style="left:143.30px;top:2.80px"><path d="M1.2 1.6H14.8L9.6 8V13.6L6.4 12.2V8Z" fill="none" stroke="#dcdcdc" stroke-width="1.5" stroke-linejoin="round"/></svg>
<svg width="4.6" height="3.2" viewBox="0 0 10 7" style="left:153.00px;top:5.50px"><path d="M1.4 1.4L5 5.2L8.6 1.4" stroke="#d0d0d0" stroke-width="1.6" fill="none"/></svg>
<div class="a" style="left:161.80px;top:2.00px;width:10.00px;height:9.50px;background:#4c4c4c;border-radius:1.5px;"></div>
<svg width="8" height="8" viewBox="0 0 16 16" style="left:162.90px;top:2.60px"><rect x="2" y="5" width="9.5" height="9" fill="none" stroke="#dcdcdc" stroke-width="1.3"/><path d="M2 5L4 2.5H9" fill="none" stroke="#dcdcdc" stroke-width="1.2"/><circle cx="12" cy="4" r="3" fill="#dcdcdc"/><path d="M5 8.5H8.5V11H5Z" fill="#dcdcdc"/></svg>
<svg width="8.2" height="8.2" viewBox="0 0 16 16" style="left:11.50px;top:15.70px"><rect x="1" y="1.5" width="14" height="4" fill="#dcdcdc"/><path d="M2 6.5H14V14.5H2Z" fill="#dcdcdc"/><rect x="5.5" y="8" width="5" height="2" fill="#282828"/></svg>
<div class="t" style="left:23.30px;top:15.70px;color:#dadada;">シーンコレクション</div>
<svg width="4.6" height="3.2" viewBox="0 0 10 7" style="left:13.50px;top:29.20px"><path d="M1.4 1.4L5 5.2L8.6 1.4" stroke="#c0c0c0" stroke-width="1.6" fill="none"/></svg>
<div class="a" style="left:21.10px;top:26.10px;width:9.50px;height:8.70px;background:#4a4a4a;border-radius:2px;"></div>
<svg width="7.6" height="7.6" viewBox="0 0 16 16" style="left:22.00px;top:26.70px"><rect x="1" y="1.5" width="14" height="4" fill="#f0f0f0"/><path d="M2 6.5H14V14.5H2Z" fill="#f0f0f0"/><rect x="5.5" y="8" width="5" height="2" fill="#4a4a4a"/></svg>
<div class="t l" style="left:33.40px;top:26.60px;color:#dadada;">Collection</div>
<div class="a" style="left:14.60px;top:37.80px;width:0.60px;height:27.50px;background:#4a4a4a;border-radius:0;"></div>
<svg width="3.2" height="4.6" viewBox="0 0 7 10" style="left:24.70px;top:39.10px"><path d="M1.4 1.4L5.2 5L1.4 8.6" stroke="#c8c8c8" stroke-width="1.6" fill="none"/></svg>
<svg width="8.4" height="8" viewBox="0 0 17 16" style="left:32.50px;top:37.40px"><rect x="1" y="7" width="10.5" height="7" rx="1.2" fill="#e8913a"/><path d="M11.5 9.5L15.5 8V14L11.5 12.5Z" fill="#e8913a"/><circle cx="4" cy="4.2" r="2.6" fill="#e8913a"/><circle cx="9.4" cy="3.8" r="3.1" fill="#e8913a"/><circle cx="4" cy="4.2" r="1" fill="#282828"/><circle cx="9.4" cy="3.8" r="1.2" fill="#282828"/></svg>
<div class="t l" style="left:44.30px;top:37.50px;color:#dadada;">Camera</div>
<div class="a" style="left:76.40px;top:36.90px;width:10.40px;height:9.10px;background:#4a4a4a;border-radius:2px;"></div>
<svg width="8" height="8" viewBox="0 0 16 16" style="left:77.70px;top:37.60px"><rect x="2" y="7.5" width="8.5" height="5.5" rx="1" fill="none" stroke="#28c79a" stroke-width="1.2"/><path d="M10.5 9.5L14 8V12.8L10.5 11.3Z" fill="#28c79a"/><circle cx="4.4" cy="4.6" r="2" fill="none" stroke="#28c79a" stroke-width="1.1"/><circle cx="9.2" cy="4.2" r="2.5" fill="none" stroke="#28c79a" stroke-width="1.1"/></svg>
<svg width="8" height="8" viewBox="0 0 16 16" style="left:0.70px;top:48.20px"><rect x="3" y="4" width="9" height="9" fill="none" stroke="#dcdcdc" stroke-width="1.1"/><circle cx="3" cy="4" r="1.7" fill="#282828" stroke="#dcdcdc" stroke-width="1"/><circle cx="3" cy="13" r="1.7" fill="#282828" stroke="#dcdcdc" stroke-width="1"/><circle cx="12" cy="13" r="1.7" fill="#282828" stroke="#dcdcdc" stroke-width="1"/><rect x="9.5" y="1" width="5.5" height="5.5" fill="#fff"/></svg>
<svg width="3.2" height="4.6" viewBox="0 0 7 10" style="left:24.70px;top:49.80px"><path d="M1.4 1.4L5.2 5L1.4 8.6" stroke="#c8c8c8" stroke-width="1.6" fill="none"/></svg>
<div class="a" style="left:31.40px;top:47.40px;width:10.70px;height:9.20px;background:#555555;border-radius:2px;"></div>
<svg width="8" height="8" viewBox="0 0 16 16" style="left:32.90px;top:48.20px"><path d="M2 2.5H14L8 14Z" fill="none" stroke="#e8913a" stroke-width="1.8" stroke-linejoin="round"/></svg>
<div class="t l" style="left:44.30px;top:48.10px;color:#f0a12e;">Cube</div>
<div class="a" style="left:69.70px;top:47.40px;width:10.40px;height:9.20px;background:#1d4f42;border-radius:2px;border:0.5px solid #2a8068"></div>
<svg width="8" height="8" viewBox="0 0 16 16" style="left:70.90px;top:48.20px"><path d="M2.5 2.5H13.5L8 13.5Z" fill="none" stroke="#28c79a" stroke-width="1.2"/><circle cx="2.5" cy="2.5" r="1.3" fill="#28c79a"/><circle cx="13.5" cy="2.5" r="1.3" fill="#28c79a"/><circle cx="8" cy="13.5" r="1.3" fill="#28c79a"/></svg>
<svg width="3.2" height="4.6" viewBox="0 0 7 10" style="left:24.70px;top:60.30px"><path d="M1.4 1.4L5.2 5L1.4 8.6" stroke="#c8c8c8" stroke-width="1.6" fill="none"/></svg>
<svg width="8" height="8.4" viewBox="0 0 16 17" style="left:32.90px;top:58.40px"><path d="M8 1A5.4 5.4 0 0 1 11 10.8V12.5H5V10.8A5.4 5.4 0 0 1 8 1Z" fill="#e8913a"/><rect x="5.6" y="13.3" width="4.8" height="1.3" fill="#e8913a"/><rect x="6.4" y="15.2" width="3.2" height="1.2" fill="#e8913a"/><path d="M8 12V7M6.2 6L8 7.6L9.8 6" stroke="#282828" stroke-width="0.9" fill="none"/></svg>
<div class="t l" style="left:44.30px;top:58.80px;color:#dadada;">Light</div>
<svg width="7.4" height="8.4" viewBox="0 0 15 17" style="left:71.30px;top:58.60px"><circle cx="7.5" cy="6.8" r="5.6" fill="none" stroke="#28c79a" stroke-width="1.1"/><path d="M7.5 16V7.5" stroke="#28c79a" stroke-width="1.2"/><circle cx="7.5" cy="6.8" r="1.5" fill="#28c79a"/></svg>
<svg width="6.4" height="6.2" viewBox="0 0 13 13" style="left:141.40px;top:27.00px"><rect x="0.5" y="0.5" width="12" height="12" rx="2" fill="#f0f0f0"/><path d="M3 6.5L5.6 9.2L10.2 3.6" fill="none" stroke="#202020" stroke-width="1.8"/></svg>
<svg width="6.8" height="5.6" viewBox="0 0 14 11.5" style="left:152.10px;top:27.50px"><path d="M0.8 5.75Q7 -1.6 13.2 5.75Q7 13.1 0.8 5.75Z" fill="none" stroke="#e0e0e0" stroke-width="1.3"/><circle cx="7" cy="5.75" r="2.3" fill="none" stroke="#e0e0e0" stroke-width="1.3"/></svg>
<svg width="7.2" height="6.4" viewBox="0 0 14.4 12.8" style="left:162.60px;top:27.40px"><path d="M1 3.4H4L5.2 1.4H9.2L10.4 3.4H13.4V11.8H1Z" fill="#d8d8d8"/><circle cx="7.2" cy="7.4" r="2.5" fill="#282828"/><circle cx="7.2" cy="7.4" r="1.2" fill="#d8d8d8"/></svg>
<svg width="6.8" height="5.6" viewBox="0 0 14 11.5" style="left:152.10px;top:38.30px"><path d="M0.8 5.75Q7 -1.6 13.2 5.75Q7 13.1 0.8 5.75Z" fill="none" stroke="#e0e0e0" stroke-width="1.3"/><circle cx="7" cy="5.75" r="2.3" fill="none" stroke="#e0e0e0" stroke-width="1.3"/></svg>
<svg width="7.2" height="6.4" viewBox="0 0 14.4 12.8" style="left:162.60px;top:38.20px"><path d="M1 3.4H4L5.2 1.4H9.2L10.4 3.4H13.4V11.8H1Z" fill="#d8d8d8"/><circle cx="7.2" cy="7.4" r="2.5" fill="#282828"/><circle cx="7.2" cy="7.4" r="1.2" fill="#d8d8d8"/></svg>
<svg width="6.8" height="5.6" viewBox="0 0 14 11.5" style="left:152.10px;top:49.00px"><path d="M0.8 5.75Q7 -1.6 13.2 5.75Q7 13.1 0.8 5.75Z" fill="none" stroke="#e0e0e0" stroke-width="1.3"/><circle cx="7" cy="5.75" r="2.3" fill="none" stroke="#e0e0e0" stroke-width="1.3"/></svg>
<svg width="7.2" height="6.4" viewBox="0 0 14.4 12.8" style="left:162.60px;top:48.90px"><path d="M1 3.4H4L5.2 1.4H9.2L10.4 3.4H13.4V11.8H1Z" fill="#d8d8d8"/><circle cx="7.2" cy="7.4" r="2.5" fill="#282828"/><circle cx="7.2" cy="7.4" r="1.2" fill="#d8d8d8"/></svg>
<svg width="6.8" height="5.6" viewBox="0 0 14 11.5" style="left:152.10px;top:59.50px"><path d="M0.8 5.75Q7 -1.6 13.2 5.75Q7 13.1 0.8 5.75Z" fill="none" stroke="#e0e0e0" stroke-width="1.3"/><circle cx="7" cy="5.75" r="2.3" fill="none" stroke="#e0e0e0" stroke-width="1.3"/></svg>
<svg width="7.2" height="6.4" viewBox="0 0 14.4 12.8" style="left:162.60px;top:59.40px"><path d="M1 3.4H4L5.2 1.4H9.2L10.4 3.4H13.4V11.8H1Z" fill="#d8d8d8"/><circle cx="7.2" cy="7.4" r="2.5" fill="#282828"/><circle cx="7.2" cy="7.4" r="1.2" fill="#d8d8d8"/></svg>
</div>
<div class="a" id="pr" style="left:847.5px;top:178.5px;width:176.5px;height:346.5px;background:#303030;border-radius:4px 0 0 4px;overflow:hidden">
<div class="a" style="left:0;top:13.5px;width:14.5px;height:333px;background:#1e1e1e"></div>
<div class="a" style="left:5.20px;top:1.70px;width:14.90px;height:9.10px;background:#262626;border-radius:1.5px;"></div>
<svg width="8" height="7.6" viewBox="0 0 16 15" style="left:6.70px;top:2.50px"><rect x="1" y="1" width="11" height="5" rx="2.5" fill="none" stroke="#dcdcdc" stroke-width="1.2"/><rect x="1" y="1" width="6" height="5" rx="2.5" fill="#dcdcdc"/><rect x="1" y="9" width="11" height="5" rx="2.5" fill="none" stroke="#dcdcdc" stroke-width="1.2"/><rect x="1" y="9" width="8" height="5" rx="2.5" fill="#dcdcdc"/></svg>
<svg width="5" height="3.4" viewBox="0 0 10 7" style="left:14.80px;top:4.80px"><path d="M1.4 1.4L5 5.2L8.6 1.4" stroke="#d0d0d0" stroke-width="1.5" fill="none"/></svg>
<div class="a" style="left:57.40px;top:1.70px;width:62.10px;height:9.10px;background:#1d1d1d;border-radius:1.5px;border:0.5px solid #3a3a3a"></div>
<svg width="7.5" height="7.5" viewBox="0 0 15 15" style="left:59.90px;top:2.70px"><circle cx="9" cy="6" r="4" fill="none" stroke="#c8c8c8" stroke-width="1.5"/><path d="M6 9L1.5 13.5" stroke="#c8c8c8" stroke-width="1.8"/></svg>
<div class="t" style="left:70.20px;top:2.40px;color:#6a6a6a;">検索</div>
<div class="a" style="left:162.70px;top:1.70px;width:9.50px;height:9.10px;background:#262626;border-radius:1.5px;"></div>
<svg width="5" height="3.4" viewBox="0 0 10 7" style="left:165.00px;top:4.80px"><path d="M1.4 1.4L5 5.2L8.6 1.4" stroke="#d0d0d0" stroke-width="1.5" fill="none"/></svg>
<div class="a" style="left:1.50px;top:135.30px;width:13.00px;height:14.60px;background:#303030;border-radius:2px 0 0 2px;"></div>
<svg width="9.2" height="9.2" viewBox="0 0 16 16" style="left:2.70px;top:19.70px"><path d="M4 1.5V8M4 12A1.8 1.8 0 1 0 4.01 12ZM4 8V10" fill="none" stroke="#d8d8d8" stroke-width="1.6"/><path d="M9 1.5V5L11.5 7.5L14 5V1.5M11.5 7.5V14.5" fill="none" stroke="#d8d8d8" stroke-width="1.6"/></svg>
<svg width="9.2" height="9.2" viewBox="0 0 16 16" style="left:2.70px;top:38.90px"><rect x="1.5" y="4.5" width="12" height="9.5" rx="1" fill="none" stroke="#d8d8d8" stroke-width="1.5"/><path d="M4 4.5V2H8V4.5" fill="none" stroke="#d8d8d8" stroke-width="1.3"/><rect x="9" y="8.5" width="4.5" height="5.5" fill="#d8d8d8"/></svg>
<svg width="9.2" height="9.2" viewBox="0 0 16 16" style="left:2.70px;top:54.00px"><path d="M2 2H14V6H2ZM3.5 7.5H12.5V11H3.5Z" fill="#d8d8d8"/><path d="M5 11V14.5H11V11" fill="none" stroke="#d8d8d8" stroke-width="1.3"/></svg>
<svg width="9.2" height="9.2" viewBox="0 0 16 16" style="left:2.70px;top:69.00px"><rect x="1.5" y="5" width="9.5" height="9.5" rx="1" fill="#8a8a8a"/><rect x="4.5" y="1.8" width="9.8" height="9.8" rx="1" fill="#222" stroke="#d8d8d8" stroke-width="1.3"/><path d="M6.5 9.5L9.4 5L12.3 9.5Z" fill="#d8d8d8"/></svg>
<svg width="9.2" height="9.2" viewBox="0 0 16 16" style="left:2.70px;top:84.00px"><path d="M4.5 1.5L7.8 11.5H1.2Z" fill="#d8d8d8"/><circle cx="10.6" cy="10.8" r="3.5" fill="none" stroke="#d8d8d8" stroke-width="1.5"/><circle cx="11.8" cy="3.4" r="1.7" fill="#d8d8d8"/></svg>
<svg width="9.2" height="9.2" viewBox="0 0 16 16" style="left:2.70px;top:98.90px"><circle cx="8" cy="8" r="6.2" fill="none" stroke="#d0525e" stroke-width="1.5"/><path d="M4 4Q7 5 6 8T9 13M10 2.5Q9 5.5 13.5 6.5" fill="none" stroke="#d0525e" stroke-width="1.3"/></svg>
<svg width="9.2" height="9.2" viewBox="0 0 16 16" style="left:2.70px;top:118.40px"><rect x="1.5" y="2" width="13" height="3.6" fill="#d8d8d8"/><path d="M2.6 6.6H13.4V14H2.6Z" fill="none" stroke="#d8d8d8" stroke-width="1.4"/><rect x="6" y="8.4" width="4" height="1.6" fill="#d8d8d8"/></svg>
<svg width="9.2" height="9.2" viewBox="0 0 16 16" style="left:2.70px;top:137.90px"><rect x="4" y="4" width="8" height="8" fill="#f09a3c"/><path d="M1.5 5V1.5H5M11 1.5H14.5V5M14.5 11V14.5H11M5 14.5H1.5V11" fill="none" stroke="#f09a3c" stroke-width="1.4"/></svg>
<svg width="9.2" height="9.2" viewBox="0 0 16 16" style="left:2.70px;top:152.80px"><path d="M13.2 1.8A4.4 4.4 0 0 0 7.8 7.4L1.6 13.6L3.4 15.4L9.6 9.2A4.4 4.4 0 0 0 15.2 3.8L12.4 6.4L10.4 4.4Z" fill="#5682c8"/></svg>
<svg width="9.2" height="9.2" viewBox="0 0 16 16" style="left:2.70px;top:167.70px"><path d="M2 2L8 8M8 8L14 5M8 8L6 14" stroke="#5682c8" stroke-width="1.2" fill="none"/><circle cx="2.4" cy="2.4" r="1.6" fill="#5682c8"/><circle cx="13.6" cy="5" r="1.4" fill="#5682c8"/><circle cx="6" cy="13.6" r="1.4" fill="#5682c8"/><circle cx="8" cy="8" r="1.6" fill="#5682c8"/></svg>
<svg width="9.2" height="9.2" viewBox="0 0 16 16" style="left:2.70px;top:182.60px"><circle cx="8" cy="8" r="5.4" fill="none" stroke="#5682c8" stroke-width="1.4"/><circle cx="8" cy="8" r="2.2" fill="#5682c8"/><circle cx="13" cy="3.4" r="1.5" fill="#5682c8"/></svg>
<svg width="9.2" height="9.2" viewBox="0 0 16 16" style="left:2.70px;top:197.50px"><ellipse cx="7" cy="9" rx="5.4" ry="4" fill="none" stroke="#5682c8" stroke-width="1.4" transform="rotate(-25 7 9)"/><circle cx="9.5" cy="6.4" r="3.4" fill="none" stroke="#5682c8" stroke-width="1.4"/></svg>
<svg width="9.2" height="9.2" viewBox="0 0 16 16" style="left:2.70px;top:212.40px"><path d="M2.5 3H13.5L8 13.5Z" fill="none" stroke="#2fd39a" stroke-width="1.3"/><circle cx="2.5" cy="3" r="1.5" fill="#2fd39a"/><circle cx="13.5" cy="3" r="1.5" fill="#2fd39a"/><circle cx="8" cy="13.5" r="1.5" fill="#2fd39a"/></svg>
<svg width="9.2" height="9.2" viewBox="0 0 16 16" style="left:2.70px;top:227.30px"><circle cx="8" cy="8" r="6" fill="#c8525e"/><path d="M8 2A6 6 0 0 1 14 8H8Z" fill="#e8a8ae"/><path d="M8 8H2A6 6 0 0 0 8 14Z" fill="#7a2a34"/></svg>
<svg width="8.4" height="8.4" viewBox="0 0 16 16" style="left:19.60px;top:18.30px"><rect x="4" y="4" width="8" height="8" fill="#dcdcdc"/><path d="M1.5 5V1.5H5M11 1.5H14.5V5M14.5 11V14.5H11M5 14.5H1.5V11" fill="none" stroke="#dcdcdc" stroke-width="1.3"/></svg>
<div class="t l" style="left:32.50px;top:18.90px;color:#dcdcdc;">Cube</div>
<svg width="7.2" height="7.2" viewBox="0 0 14 14" style="left:163.70px;top:18.90px"><path d="M8.5 1.5L12.5 5.5L10.5 6L8 8.5L7.6 11.2L2.8 6.4L5.5 6L8 3.5ZM5 9L1.2 12.8" stroke="#9a9a9a" stroke-width="1.2" fill="none" stroke-linejoin="round"/></svg>
<div class="a" style="left:19.60px;top:37.70px;width:15.50px;height:8.90px;background:#262626;border-radius:1.5px 0 0 1.5px;"></div>
<svg width="8.2" height="8.2" viewBox="0 0 16 16" style="left:20.70px;top:38.10px"><rect x="4" y="4" width="8" height="8" fill="#dcdcdc"/><path d="M1.5 5V1.5H5M11 1.5H14.5V5M14.5 11V14.5H11M5 14.5H1.5V11" fill="none" stroke="#dcdcdc" stroke-width="1.3"/></svg>
<svg width="5" height="3.4" viewBox="0 0 10 7" style="left:29.60px;top:40.90px"><path d="M1.4 1.4L5 5.2L8.6 1.4" stroke="#d0d0d0" stroke-width="1.5" fill="none"/></svg>
<div class="a" style="left:35.50px;top:37.70px;width:136.60px;height:8.90px;background:#1d1d1d;border-radius:0 1.5px 1.5px 0;"></div>
<div class="t l" style="left:39.50px;top:38.20px;color:#e6e6e6;">Cube</div>
<div class="a" style="left:18.90px;top:52.90px;width:153.50px;height:149.40px;background:#3c3c3c;border-radius:2px;"></div>
<svg width="5" height="3.4" viewBox="0 0 10 7" style="left:23.30px;top:58.00px"><path d="M1.4 1.4L5 5.2L8.6 1.4" stroke="#d0d0d0" stroke-width="1.5" fill="none"/></svg>
<div class="t" style="left:30.70px;top:55.50px;color:#e0e0e0;">トランスフォーム</div>
<svg width="6.4" height="2.8" viewBox="0 0 12.8 5.6" style="left:162.30px;top:57.90px"><path d="M0.6 1.2H2.2M3.9 1.2H5.5M7.2 1.2H8.8M10.5 1.2H12.1M0.6 4.4H2.2M3.9 4.4H5.5M7.2 4.4H8.8M10.5 4.4H12.1" stroke="#686868" stroke-width="1.5"/></svg>
<div class="a" style="left:79.60px;top:70.70px;width:66.70px;height:10.70px;background:#545454;border-radius:1.5px 1.5px 0 0;"></div>
<div class="a" style="left:79.60px;top:80.50px;width:66.70px;height:0.50px;background:#474747;border-radius:0;"></div>
<div class="t l" style="left:79.60px;width:66.70px;text-align:center;top:71.40px;color:#e8e8e8;">0 m</div>
<div class="t" style="right:102.60px;top:71.40px;color:#dcdcdc;">位置 <span class="l">X</span></div>
<svg width="8.4" height="6.6" viewBox="0 0 16.8 13.2" style="left:147.80px;top:72.10px"><rect x="6.6" y="5.6" width="9" height="6.4" rx="0.8" fill="none" stroke="#c8c8c8" stroke-width="1.3"/><path d="M11.1 6V12" stroke="#c8c8c8" stroke-width="1"/><path d="M0.8 3.6Q2.4 0.6 5 1.4Q6.6 2.4 7.2 5.6" fill="none" stroke="#c8c8c8" stroke-width="1.2"/></svg>
<div class="a" style="left:161.90px;top:74.70px;width:1.80px;height:1.80px;background:#d8d8d8;border-radius:50%;"></div>
<div class="a" style="left:79.60px;top:81.30px;width:66.70px;height:10.70px;background:#545454;border-radius:0;"></div>
<div class="a" style="left:79.60px;top:91.10px;width:66.70px;height:0.50px;background:#474747;border-radius:0;"></div>
<div class="t l" style="left:79.60px;width:66.70px;text-align:center;top:82.00px;color:#e8e8e8;">0 m</div>
<div class="t" style="right:102.60px;top:82.00px;color:#dcdcdc;"><span class="l">Y</span></div>
<svg width="8.4" height="6.6" viewBox="0 0 16.8 13.2" style="left:147.80px;top:82.70px"><rect x="6.6" y="5.6" width="9" height="6.4" rx="0.8" fill="none" stroke="#c8c8c8" stroke-width="1.3"/><path d="M11.1 6V12" stroke="#c8c8c8" stroke-width="1"/><path d="M0.8 3.6Q2.4 0.6 5 1.4Q6.6 2.4 7.2 5.6" fill="none" stroke="#c8c8c8" stroke-width="1.2"/></svg>
<div class="a" style="left:161.90px;top:85.30px;width:1.80px;height:1.80px;background:#d8d8d8;border-radius:50%;"></div>
<div class="a" style="left:79.60px;top:91.80px;width:66.70px;height:9.60px;background:#545454;border-radius:0 0 1.5px 1.5px;"></div>
<div class="t l" style="left:79.60px;width:66.70px;text-align:center;top:92.50px;color:#e8e8e8;">0 m</div>
<div class="t" style="right:102.60px;top:92.50px;color:#dcdcdc;"><span class="l">Z</span></div>
<svg width="8.4" height="6.6" viewBox="0 0 16.8 13.2" style="left:147.80px;top:93.20px"><rect x="6.6" y="5.6" width="9" height="6.4" rx="0.8" fill="none" stroke="#c8c8c8" stroke-width="1.3"/><path d="M11.1 6V12" stroke="#c8c8c8" stroke-width="1"/><path d="M0.8 3.6Q2.4 0.6 5 1.4Q6.6 2.4 7.2 5.6" fill="none" stroke="#c8c8c8" stroke-width="1.2"/></svg>
<div class="a" style="left:161.90px;top:95.80px;width:1.80px;height:1.80px;background:#d8d8d8;border-radius:50%;"></div>
<div class="a" style="left:79.60px;top:105.20px;width:66.70px;height:10.70px;background:#545454;border-radius:1.5px 1.5px 0 0;"></div>
<div class="a" style="left:79.60px;top:115.00px;width:66.70px;height:0.50px;background:#474747;border-radius:0;"></div>
<div class="t l" style="left:79.60px;width:66.70px;text-align:center;top:105.90px;color:#e8e8e8;">0°</div>
<div class="t" style="right:102.60px;top:105.90px;color:#dcdcdc;">回転 <span class="l">X</span></div>
<svg width="8.4" height="6.6" viewBox="0 0 16.8 13.2" style="left:147.80px;top:106.60px"><rect x="6.6" y="5.6" width="9" height="6.4" rx="0.8" fill="none" stroke="#c8c8c8" stroke-width="1.3"/><path d="M11.1 6V12" stroke="#c8c8c8" stroke-width="1"/><path d="M0.8 3.6Q2.4 0.6 5 1.4Q6.6 2.4 7.2 5.6" fill="none" stroke="#c8c8c8" stroke-width="1.2"/></svg>
<div class="a" style="left:161.90px;top:109.20px;width:1.80px;height:1.80px;background:#d8d8d8;border-radius:50%;"></div>
<div class="a" style="left:79.60px;top:115.80px;width:66.70px;height:10.70px;background:#545454;border-radius:0;"></div>
<div class="a" style="left:79.60px;top:125.60px;width:66.70px;height:0.50px;background:#474747;border-radius:0;"></div>
<div class="t l" style="left:79.60px;width:66.70px;text-align:center;top:116.50px;color:#e8e8e8;">0°</div>
<div class="t" style="right:102.60px;top:116.50px;color:#dcdcdc;"><span class="l">Y</span></div>
<svg width="8.4" height="6.6" viewBox="0 0 16.8 13.2" style="left:147.80px;top:117.20px"><rect x="6.6" y="5.6" width="9" height="6.4" rx="0.8" fill="none" stroke="#c8c8c8" stroke-width="1.3"/><path d="M11.1 6V12" stroke="#c8c8c8" stroke-width="1"/><path d="M0.8 3.6Q2.4 0.6 5 1.4Q6.6 2.4 7.2 5.6" fill="none" stroke="#c8c8c8" stroke-width="1.2"/></svg>
<div class="a" style="left:161.90px;top:119.80px;width:1.80px;height:1.80px;background:#d8d8d8;border-radius:50%;"></div>
<div class="a" style="left:79.60px;top:126.30px;width:66.70px;height:9.60px;background:#545454;border-radius:0 0 1.5px 1.5px;"></div>
<div class="t l" style="left:79.60px;width:66.70px;text-align:center;top:127.00px;color:#e8e8e8;">0°</div>
<div class="t" style="right:102.60px;top:127.00px;color:#dcdcdc;"><span class="l">Z</span></div>
<svg width="8.4" height="6.6" viewBox="0 0 16.8 13.2" style="left:147.80px;top:127.70px"><rect x="6.6" y="5.6" width="9" height="6.4" rx="0.8" fill="none" stroke="#c8c8c8" stroke-width="1.3"/><path d="M11.1 6V12" stroke="#c8c8c8" stroke-width="1"/><path d="M0.8 3.6Q2.4 0.6 5 1.4Q6.6 2.4 7.2 5.6" fill="none" stroke="#c8c8c8" stroke-width="1.2"/></svg>
<div class="a" style="left:161.90px;top:130.30px;width:1.80px;height:1.80px;background:#d8d8d8;border-radius:50%;"></div>
<div class="a" style="left:79.60px;top:152.90px;width:66.70px;height:10.70px;background:#545454;border-radius:1.5px 1.5px 0 0;"></div>
<div class="a" style="left:79.60px;top:162.70px;width:66.70px;height:0.50px;background:#474747;border-radius:0;"></div>
<div class="t l" style="left:79.60px;width:66.70px;text-align:center;top:153.60px;color:#e8e8e8;">1.000</div>
<div class="t" style="right:102.60px;top:153.60px;color:#dcdcdc;">スケール <span class="l">X</span></div>
<svg width="8.4" height="6.6" viewBox="0 0 16.8 13.2" style="left:147.80px;top:154.30px"><rect x="6.6" y="5.6" width="9" height="6.4" rx="0.8" fill="none" stroke="#c8c8c8" stroke-width="1.3"/><path d="M11.1 6V12" stroke="#c8c8c8" stroke-width="1"/><path d="M0.8 3.6Q2.4 0.6 5 1.4Q6.6 2.4 7.2 5.6" fill="none" stroke="#c8c8c8" stroke-width="1.2"/></svg>
<div class="a" style="left:161.90px;top:156.90px;width:1.80px;height:1.80px;background:#d8d8d8;border-radius:50%;"></div>
<div class="a" style="left:79.60px;top:163.40px;width:66.70px;height:10.70px;background:#545454;border-radius:0;"></div>
<div class="a" style="left:79.60px;top:173.20px;width:66.70px;height:0.50px;background:#474747;border-radius:0;"></div>
<div class="t l" style="left:79.60px;width:66.70px;text-align:center;top:164.10px;color:#e8e8e8;">1.000</div>
<div class="t" style="right:102.60px;top:164.10px;color:#dcdcdc;"><span class="l">Y</span></div>
<svg width="8.4" height="6.6" viewBox="0 0 16.8 13.2" style="left:147.80px;top:164.80px"><rect x="6.6" y="5.6" width="9" height="6.4" rx="0.8" fill="none" stroke="#c8c8c8" stroke-width="1.3"/><path d="M11.1 6V12" stroke="#c8c8c8" stroke-width="1"/><path d="M0.8 3.6Q2.4 0.6 5 1.4Q6.6 2.4 7.2 5.6" fill="none" stroke="#c8c8c8" stroke-width="1.2"/></svg>
<div class="a" style="left:161.90px;top:167.40px;width:1.80px;height:1.80px;background:#d8d8d8;border-radius:50%;"></div>
<div class="a" style="left:79.60px;top:173.90px;width:66.70px;height:9.60px;background:#545454;border-radius:0 0 1.5px 1.5px;"></div>
<div class="t l" style="left:79.60px;width:66.70px;text-align:center;top:174.60px;color:#e8e8e8;">1.000</div>
<div class="t" style="right:102.60px;top:174.60px;color:#dcdcdc;"><span class="l">Z</span></div>
<svg width="8.4" height="6.6" viewBox="0 0 16.8 13.2" style="left:147.80px;top:175.30px"><rect x="6.6" y="5.6" width="9" height="6.4" rx="0.8" fill="none" stroke="#c8c8c8" stroke-width="1.3"/><path d="M11.1 6V12" stroke="#c8c8c8" stroke-width="1"/><path d="M0.8 3.6Q2.4 0.6 5 1.4Q6.6 2.4 7.2 5.6" fill="none" stroke="#c8c8c8" stroke-width="1.2"/></svg>
<div class="a" style="left:161.90px;top:177.90px;width:1.80px;height:1.80px;background:#d8d8d8;border-radius:50%;"></div>
<div class="t" style="right:102.60px;top:140.30px;color:#dcdcdc;">モード</div>
<div class="a" style="left:79.60px;top:139.50px;width:66.70px;height:10.00px;background:#282828;border-radius:1.5px;border:0.5px solid #404040"></div>
<div class="t" style="left:83.10px;top:140.30px;color:#e6e6e6;"><span class="l">XYZ</span> オイラー角</div>
<svg width="5" height="3.4" viewBox="0 0 10 7" style="left:139.60px;top:143.00px"><path d="M1.4 1.4L5 5.2L8.6 1.4" stroke="#d0d0d0" stroke-width="1.5" fill="none"/></svg>
<div class="a" style="left:161.90px;top:143.60px;width:1.80px;height:1.80px;background:#d8d8d8;border-radius:50%;"></div>
<svg width="3.7" height="5.4" viewBox="0 0 7 10" style="left:31.60px;top:193.20px"><path d="M1.4 1.2L5.4 5L1.4 8.8" stroke="#c8c8c8" stroke-width="1.4" fill="none"/></svg>
<div class="t" style="left:38.30px;top:191.90px;color:#e0e0e0;">デルタトランスフォーム</div>
<div class="a" style="left:18.90px;top:204.05px;width:153.50px;height:12.80px;background:#3c3c3c;border-radius:2px;"></div>
<svg width="3.7" height="5.4" viewBox="0 0 7 10" style="left:24.20px;top:207.80px"><path d="M1.4 1.2L5.4 5L1.4 8.8" stroke="#c8c8c8" stroke-width="1.4" fill="none"/></svg>
<div class="t" style="left:30.40px;top:206.40px;color:#e0e0e0;">関係</div>
<svg width="6.4" height="2.8" viewBox="0 0 12.8 5.6" style="left:162.30px;top:208.90px"><path d="M0.6 1.2H2.2M3.9 1.2H5.5M7.2 1.2H8.8M10.5 1.2H12.1M0.6 4.4H2.2M3.9 4.4H5.5M7.2 4.4H8.8M10.5 4.4H12.1" stroke="#686868" stroke-width="1.5"/></svg>
<div class="a" style="left:18.90px;top:218.44px;width:153.50px;height:12.80px;background:#3c3c3c;border-radius:2px;"></div>
<svg width="3.7" height="5.4" viewBox="0 0 7 10" style="left:24.20px;top:222.19px"><path d="M1.4 1.2L5.4 5L1.4 8.8" stroke="#c8c8c8" stroke-width="1.4" fill="none"/></svg>
<div class="t" style="left:30.40px;top:220.79px;color:#e0e0e0;">コレクション</div>
<svg width="6.4" height="2.8" viewBox="0 0 12.8 5.6" style="left:162.30px;top:223.29px"><path d="M0.6 1.2H2.2M3.9 1.2H5.5M7.2 1.2H8.8M10.5 1.2H12.1M0.6 4.4H2.2M3.9 4.4H5.5M7.2 4.4H8.8M10.5 4.4H12.1" stroke="#686868" stroke-width="1.5"/></svg>
<div class="a" style="left:18.90px;top:232.83px;width:153.50px;height:12.80px;background:#3c3c3c;border-radius:2px;"></div>
<svg width="3.7" height="5.4" viewBox="0 0 7 10" style="left:24.20px;top:236.58px"><path d="M1.4 1.2L5.4 5L1.4 8.8" stroke="#c8c8c8" stroke-width="1.4" fill="none"/></svg>
<div class="t" style="left:30.40px;top:235.18px;color:#e0e0e0;">インスタンス化</div>
<svg width="6.4" height="2.8" viewBox="0 0 12.8 5.6" style="left:162.30px;top:237.68px"><path d="M0.6 1.2H2.2M3.9 1.2H5.5M7.2 1.2H8.8M10.5 1.2H12.1M0.6 4.4H2.2M3.9 4.4H5.5M7.2 4.4H8.8M10.5 4.4H12.1" stroke="#686868" stroke-width="1.5"/></svg>
<div class="a" style="left:18.90px;top:247.22px;width:153.50px;height:12.80px;background:#3c3c3c;border-radius:2px;"></div>
<svg width="3.7" height="5.4" viewBox="0 0 7 10" style="left:24.20px;top:250.97px"><path d="M1.4 1.2L5.4 5L1.4 8.8" stroke="#c8c8c8" stroke-width="1.4" fill="none"/></svg>
<div class="t" style="left:30.40px;top:249.57px;color:#e0e0e0;">モーションパス</div>
<svg width="6.4" height="2.8" viewBox="0 0 12.8 5.6" style="left:162.30px;top:252.07px"><path d="M0.6 1.2H2.2M3.9 1.2H5.5M7.2 1.2H8.8M10.5 1.2H12.1M0.6 4.4H2.2M3.9 4.4H5.5M7.2 4.4H8.8M10.5 4.4H12.1" stroke="#686868" stroke-width="1.5"/></svg>
<div class="a" style="left:18.90px;top:261.61px;width:153.50px;height:12.80px;background:#3c3c3c;border-radius:2px;"></div>
<svg width="3.7" height="5.4" viewBox="0 0 7 10" style="left:24.20px;top:265.36px"><path d="M1.4 1.2L5.4 5L1.4 8.8" stroke="#c8c8c8" stroke-width="1.4" fill="none"/></svg>
<div class="t" style="left:30.40px;top:263.96px;color:#e0e0e0;">シェーディング</div>
<svg width="6.4" height="2.8" viewBox="0 0 12.8 5.6" style="left:162.30px;top:266.46px"><path d="M0.6 1.2H2.2M3.9 1.2H5.5M7.2 1.2H8.8M10.5 1.2H12.1M0.6 4.4H2.2M3.9 4.4H5.5M7.2 4.4H8.8M10.5 4.4H12.1" stroke="#686868" stroke-width="1.5"/></svg>
<div class="a" style="left:18.90px;top:276.00px;width:153.50px;height:12.80px;background:#3c3c3c;border-radius:2px;"></div>
<svg width="3.7" height="5.4" viewBox="0 0 7 10" style="left:24.20px;top:279.75px"><path d="M1.4 1.2L5.4 5L1.4 8.8" stroke="#c8c8c8" stroke-width="1.4" fill="none"/></svg>
<div class="t" style="left:30.40px;top:278.35px;color:#e0e0e0;">可視性</div>
<svg width="6.4" height="2.8" viewBox="0 0 12.8 5.6" style="left:162.30px;top:280.85px"><path d="M0.6 1.2H2.2M3.9 1.2H5.5M7.2 1.2H8.8M10.5 1.2H12.1M0.6 4.4H2.2M3.9 4.4H5.5M7.2 4.4H8.8M10.5 4.4H12.1" stroke="#686868" stroke-width="1.5"/></svg>
<div class="a" style="left:18.90px;top:290.39px;width:153.50px;height:12.80px;background:#3c3c3c;border-radius:2px;"></div>
<svg width="3.7" height="5.4" viewBox="0 0 7 10" style="left:24.20px;top:294.14px"><path d="M1.4 1.2L5.4 5L1.4 8.8" stroke="#c8c8c8" stroke-width="1.4" fill="none"/></svg>
<div class="t" style="left:30.40px;top:292.74px;color:#e0e0e0;">ビューポート表示</div>
<svg width="6.4" height="2.8" viewBox="0 0 12.8 5.6" style="left:162.30px;top:295.24px"><path d="M0.6 1.2H2.2M3.9 1.2H5.5M7.2 1.2H8.8M10.5 1.2H12.1M0.6 4.4H2.2M3.9 4.4H5.5M7.2 4.4H8.8M10.5 4.4H12.1" stroke="#686868" stroke-width="1.5"/></svg>
<div class="a" style="left:18.90px;top:304.78px;width:153.50px;height:12.80px;background:#3c3c3c;border-radius:2px;"></div>
<svg width="3.7" height="5.4" viewBox="0 0 7 10" style="left:24.20px;top:308.53px"><path d="M1.4 1.2L5.4 5L1.4 8.8" stroke="#c8c8c8" stroke-width="1.4" fill="none"/></svg>
<div class="t" style="left:30.40px;top:307.13px;color:#e0e0e0;">ラインアート</div>
<svg width="6.4" height="2.8" viewBox="0 0 12.8 5.6" style="left:162.30px;top:309.63px"><path d="M0.6 1.2H2.2M3.9 1.2H5.5M7.2 1.2H8.8M10.5 1.2H12.1M0.6 4.4H2.2M3.9 4.4H5.5M7.2 4.4H8.8M10.5 4.4H12.1" stroke="#686868" stroke-width="1.5"/></svg>
<div class="a" style="left:18.90px;top:319.17px;width:153.50px;height:12.80px;background:#3c3c3c;border-radius:2px;"></div>
<svg width="3.7" height="5.4" viewBox="0 0 7 10" style="left:24.20px;top:322.92px"><path d="M1.4 1.2L5.4 5L1.4 8.8" stroke="#c8c8c8" stroke-width="1.4" fill="none"/></svg>
<div class="t" style="left:30.40px;top:321.52px;color:#e0e0e0;">アニメーション</div>
<svg width="6.4" height="2.8" viewBox="0 0 12.8 5.6" style="left:162.30px;top:324.02px"><path d="M0.6 1.2H2.2M3.9 1.2H5.5M7.2 1.2H8.8M10.5 1.2H12.1M0.6 4.4H2.2M3.9 4.4H5.5M7.2 4.4H8.8M10.5 4.4H12.1" stroke="#686868" stroke-width="1.5"/></svg>
<div class="a" style="left:18.90px;top:333.56px;width:153.50px;height:12.80px;background:#3c3c3c;border-radius:2px;"></div>
<svg width="3.7" height="5.4" viewBox="0 0 7 10" style="left:24.20px;top:337.31px"><path d="M1.4 1.2L5.4 5L1.4 8.8" stroke="#c8c8c8" stroke-width="1.4" fill="none"/></svg>
<div class="t" style="left:30.40px;top:335.91px;color:#e0e0e0;">カスタムプロパティ</div>
<svg width="6.4" height="2.8" viewBox="0 0 12.8 5.6" style="left:162.30px;top:338.41px"><path d="M0.6 1.2H2.2M3.9 1.2H5.5M7.2 1.2H8.8M10.5 1.2H12.1M0.6 4.4H2.2M3.9 4.4H5.5M7.2 4.4H8.8M10.5 4.4H12.1" stroke="#686868" stroke-width="1.5"/></svg>
</div>
<div class="a" id="tl" style="left:0;top:487px;width:845.5px;height:38px;background:#1d1d1d;border-radius:4px;overflow:hidden">
<div class="a" style="left:0;top:0;width:100%;height:14px;background:#303030"></div>
<div class="a" style="left:5.90px;top:2.50px;width:15.00px;height:9.30px;background:#262626;border-radius:1.5px;"></div>
<svg width="8" height="8" viewBox="0 0 16 16" style="left:7.40px;top:3.20px"><circle cx="8" cy="8" r="6.8" fill="#dcdcdc"/><path d="M8 3.5V8L5 11" fill="none" stroke="#262626" stroke-width="1.6"/><path d="M8 1.2A6.8 6.8 0 0 1 8 14.8Z" fill="#262626" fill-opacity="0.0"/></svg>
<svg width="5" height="3.4" viewBox="0 0 10 7" style="left:15.40px;top:5.70px"><path d="M1.4 1.4L5 5.2L8.6 1.4" stroke="#d0d0d0" stroke-width="1.5" fill="none"/></svg>
<div class="a" style="left:25.00px;top:2.50px;width:23.10px;height:9.30px;background:#262626;border-radius:1.5px 0 0 1.5px;"></div>
<div class="t" style="left:27.90px;top:3.20px;">再生</div>
<svg width="5" height="3.4" viewBox="0 0 10 7" style="left:42.70px;top:5.70px"><path d="M1.4 1.4L5 5.2L8.6 1.4" stroke="#d0d0d0" stroke-width="1.5" fill="none"/></svg>
<div class="a" style="left:48.50px;top:2.50px;width:42.70px;height:9.30px;background:#262626;border-radius:0 1.5px 1.5px 0;"></div>
<div class="t" style="left:53.00px;top:3.20px;">キーイング</div>
<svg width="5" height="3.4" viewBox="0 0 10 7" style="left:85.70px;top:5.70px"><path d="M1.4 1.4L5 5.2L8.6 1.4" stroke="#d0d0d0" stroke-width="1.5" fill="none"/></svg>
<div class="t" style="left:97.00px;top:3.20px;">ビュー</div>
<div class="t" style="left:122.40px;top:3.20px;">マーカー</div>
<div class="a" style="left:374.00px;top:2.50px;width:9.60px;height:9.30px;background:#4a4a4a;border-radius:1.5px 0 0 1.5px;"></div>
<svg width="8" height="8" viewBox="0 0 14 14" style="left:374.80px;top:3.15px"><circle cx="7" cy="7" r="4.6" fill="none" stroke="#8c8c8c" stroke-width="1.4"/></svg>
<div class="a" style="left:383.80px;top:2.50px;width:9.80px;height:9.30px;background:#282828;border-radius:0 1.5px 1.5px 0;"></div>
<svg width="5" height="3.4" viewBox="0 0 10 7" style="left:386.30px;top:5.90px"><path d="M1.4 1.4L5 5.2L8.6 1.4" stroke="#4a4a4a" stroke-width="1.5" fill="none"/></svg>
<div class="a" style="left:397.90px;top:2.50px;width:62.50px;height:9.30px;background:#4d4d4d;border-radius:1.5px;"></div>
<div class="a" style="left:408.07px;top:2.50px;width:0.50px;height:9.30px;background:#3a3a3a;border-radius:0;"></div>
<div class="a" style="left:418.49px;top:2.50px;width:0.50px;height:9.30px;background:#3a3a3a;border-radius:0;"></div>
<div class="a" style="left:428.91px;top:2.50px;width:0.50px;height:9.30px;background:#3a3a3a;border-radius:0;"></div>
<div class="a" style="left:439.33px;top:2.50px;width:0.50px;height:9.30px;background:#3a3a3a;border-radius:0;"></div>
<div class="a" style="left:449.75px;top:2.50px;width:0.50px;height:9.30px;background:#3a3a3a;border-radius:0;"></div>
<svg width="8" height="8" viewBox="0 0 14 14" style="left:399.10px;top:3.15px"><path d="M2.6 1.6V12.4" stroke="#f0f0f0" stroke-width="2"/><path d="M12 1.8V12.2L4.2 7Z" fill="#f0f0f0"/></svg>
<svg width="8" height="8" viewBox="0 0 14 14" style="left:409.52px;top:3.15px"><path d="M5.6 2.4L10.2 7L5.6 11.6L1 7Z" fill="#f0f0f0"/><path d="M13.6 3.6L9.6 7L13.6 10.4Z" fill="#f0f0f0"/></svg>
<svg width="8" height="8" viewBox="0 0 14 14" style="left:419.94px;top:3.15px"><path d="M11.4 1.4V12.6L2.2 7Z" fill="#f0f0f0"/></svg>
<svg width="8" height="8" viewBox="0 0 14 14" style="left:430.36px;top:3.15px"><path d="M2.6 1.4V12.6L11.8 7Z" fill="#f0f0f0"/></svg>
<svg width="8" height="8" viewBox="0 0 14 14" style="left:440.78px;top:3.15px"><path d="M8.4 2.4L13 7L8.4 11.6L3.8 7Z" fill="#f0f0f0"/><path d="M0.4 3.6L4.4 7L0.4 10.4Z" fill="#f0f0f0"/></svg>
<svg width="8" height="8" viewBox="0 0 14 14" style="left:451.20px;top:3.15px"><path d="M11.4 1.6V12.4" stroke="#f0f0f0" stroke-width="2"/><path d="M2 1.8V12.2L9.8 7Z" fill="#f0f0f0"/></svg>
<div class="a" style="left:696.20px;top:2.20px;width:39.50px;height:9.80px;background:#545454;border-radius:1.5px;"></div>
<div class="t l" style="left:696.00px;width:40px;text-align:center;top:3.20px;color:#e8e8e8;">1</div>
<div class="a" style="left:739.00px;top:2.20px;width:10.30px;height:9.80px;background:#545454;border-radius:1.5px 0 0 1.5px;"></div>
<svg width="7.6" height="7.8" viewBox="0 0 15 16" style="left:740.40px;top:3.20px"><circle cx="7.5" cy="9" r="5.2" fill="none" stroke="#ececec" stroke-width="1.4"/><path d="M7.5 6V9.2L9.5 10.5M5.8 1.6H9.2M7.5 1.6V3.6M11.5 4.2L12.8 2.9" fill="none" stroke="#ececec" stroke-width="1.3"/></svg>
<div class="a" style="left:749.70px;top:2.20px;width:45.50px;height:9.80px;background:#545454;border-radius:0;"></div>
<div class="t" style="left:757.70px;top:3.20px;color:#e8e8e8;">開始</div>
<div class="t l" style="right:57.50px;top:3.20px;color:#e8e8e8">1</div>
<div class="a" style="left:795.60px;top:2.20px;width:46.00px;height:9.80px;background:#545454;border-radius:0 1.5px 1.5px 0;"></div>
<div class="t" style="left:803.60px;top:3.20px;color:#e8e8e8;">終了</div>
<div class="t l" style="right:11.10px;top:3.20px;color:#e8e8e8">250</div>
<div class="a" style="left:0.00px;top:25.60px;width:845.50px;height:12.40px;background:#2a2a2a;border-radius:0;"></div>
<div class="a" style="left:0.00px;top:25.60px;width:31.35px;height:12.40px;background:#1f1f1f;border-radius:0;"></div>
<div class="a" style="left:814.08px;top:25.60px;width:31.42px;height:12.40px;background:#1f1f1f;border-radius:0;"></div>
<svg width="845.5" height="38" viewBox="0 487 845.5 38" style="left:0;top:0"><path d="M12.49 512.6V525M28.21 512.6V525M43.92 512.6V525M59.64 512.6V525M75.36 512.6V525M91.08 512.6V525M106.79 512.6V525M122.51 512.6V525M138.23 512.6V525M153.95 512.6V525M169.66 512.6V525M185.38 512.6V525M201.10 512.6V525M216.82 512.6V525M232.53 512.6V525M248.25 512.6V525M263.97 512.6V525M279.69 512.6V525M295.40 512.6V525M311.12 512.6V525M326.84 512.6V525M342.56 512.6V525M358.27 512.6V525M373.99 512.6V525M389.71 512.6V525M405.43 512.6V525M421.14 512.6V525M436.86 512.6V525M452.58 512.6V525M468.30 512.6V525M484.01 512.6V525M499.73 512.6V525M515.45 512.6V525M531.17 512.6V525M546.88 512.6V525M562.60 512.6V525M578.32 512.6V525M594.04 512.6V525M609.75 512.6V525M625.47 512.6V525M641.19 512.6V525M656.91 512.6V525M672.62 512.6V525M688.34 512.6V525M704.06 512.6V525M719.78 512.6V525M735.49 512.6V525M751.21 512.6V525M766.93 512.6V525M782.65 512.6V525M798.36 512.6V525M814.08 512.6V525M829.80 512.6V525" stroke="#1f1f1f" stroke-width="0.6" fill="none"/></svg>
<div class="t l" style="left:39.64px;width:40px;text-align:center;top:16.20px;color:#c0c0c0;">10</div>
<div class="t l" style="left:71.08px;width:40px;text-align:center;top:16.20px;color:#c0c0c0;">20</div>
<div class="t l" style="left:102.51px;width:40px;text-align:center;top:16.20px;color:#c0c0c0;">30</div>
<div class="t l" style="left:133.95px;width:40px;text-align:center;top:16.20px;color:#c0c0c0;">40</div>
<div class="t l" style="left:165.38px;width:40px;text-align:center;top:16.20px;color:#c0c0c0;">50</div>
<div class="t l" style="left:196.82px;width:40px;text-align:center;top:16.20px;color:#c0c0c0;">60</div>
<div class="t l" style="left:228.25px;width:40px;text-align:center;top:16.20px;color:#c0c0c0;">70</div>
<div class="t l" style="left:259.69px;width:40px;text-align:center;top:16.20px;color:#c0c0c0;">80</div>
<div class="t l" style="left:291.12px;width:40px;text-align:center;top:16.20px;color:#c0c0c0;">90</div>
<div class="t l" style="left:322.56px;width:40px;text-align:center;top:16.20px;color:#c0c0c0;">100</div>
<div class="t l" style="left:353.99px;width:40px;text-align:center;top:16.20px;color:#c0c0c0;">110</div>
<div class="t l" style="left:385.43px;width:40px;text-align:center;top:16.20px;color:#c0c0c0;">120</div>
<div class="t l" style="left:416.86px;width:40px;text-align:center;top:16.20px;color:#c0c0c0;">130</div>
<div class="t l" style="left:448.30px;width:40px;text-align:center;top:16.20px;color:#c0c0c0;">140</div>
<div class="t l" style="left:479.73px;width:40px;text-align:center;top:16.20px;color:#c0c0c0;">150</div>
<div class="t l" style="left:511.17px;width:40px;text-align:center;top:16.20px;color:#c0c0c0;">160</div>
<div class="t l" style="left:542.60px;width:40px;text-align:center;top:16.20px;color:#c0c0c0;">170</div>
<div class="t l" style="left:574.04px;width:40px;text-align:center;top:16.20px;color:#c0c0c0;">180</div>
<div class="t l" style="left:605.47px;width:40px;text-align:center;top:16.20px;color:#c0c0c0;">190</div>
<div class="t l" style="left:636.91px;width:40px;text-align:center;top:16.20px;color:#c0c0c0;">200</div>
<div class="t l" style="left:668.34px;width:40px;text-align:center;top:16.20px;color:#c0c0c0;">210</div>
<div class="t l" style="left:699.78px;width:40px;text-align:center;top:16.20px;color:#c0c0c0;">220</div>
<div class="t l" style="left:731.21px;width:40px;text-align:center;top:16.20px;color:#c0c0c0;">230</div>
<div class="t l" style="left:762.65px;width:40px;text-align:center;top:16.20px;color:#c0c0c0;">240</div>
<div class="t l" style="left:794.08px;width:40px;text-align:center;top:16.20px;color:#c0c0c0;">250</div>
<div class="a" style="left:5.90px;top:33.10px;width:834.70px;height:3.80px;background:#585858;border-radius:2px;"></div>
<div class="a" style="left:6.60px;top:33.80px;width:2.40px;height:2.40px;background:#2a2a2a;border-radius:50%;"></div>
<div class="a" style="left:837.50px;top:33.80px;width:2.40px;height:2.40px;background:#2a2a2a;border-radius:50%;"></div>
<div class="a" style="left:31.00px;top:21.00px;width:0.80px;height:17.00px;background:#4772b3;border-radius:0;"></div>
<div class="a" style="left:25.00px;top:15.30px;width:12.80px;height:8.90px;background:#4772b3;border-radius:2px;"></div>
<div class="t l" style="left:11.40px;width:40px;text-align:center;top:16.10px;color:#ffffff;">1</div>
<svg width="3" height="4.6" viewBox="0 0 6 9" style="left:0.50px;top:22.60px"><path d="M1 1L4.5 4.5L1 8" fill="none" stroke="#9a9a9a" stroke-width="1.3"/></svg>
<div class="a" style="left:841.40px;top:20.80px;width:4.10px;height:8.20px;background:#202020;border-radius:2px 0 0 2px;"></div>
<svg width="3" height="4.6" viewBox="0 0 6 9" style="left:842.40px;top:22.80px"><path d="M5 1L1.5 4.5L5 8" fill="none" stroke="#9a9a9a" stroke-width="1.3"/></svg>
</div>
<div class="a" id="top" style="left:0;top:0;width:1024px;height:13px">
<svg width="9.4" height="8.2" viewBox="0 0 18 16" style="left:5.2px;top:1.8px"><path d="M1 12.5L8.3 7H3.2M5.5 3.8H9L7.2 2.2" stroke="#dcdcdc" stroke-width="1.9" fill="none" stroke-linecap="round" stroke-linejoin="round"/><ellipse cx="11.2" cy="9.4" rx="5.4" ry="5" fill="#dcdcdc"/><circle cx="11.4" cy="9.4" r="2.9" fill="#181818"/><circle cx="11.4" cy="9.4" r="1.5" fill="#dcdcdc"/></svg>
<div class="t" style="left:19.3px;top:1.6px">ファイル</div>
<div class="t" style="left:49.6px;top:1.6px">編集</div>
<div class="t" style="left:70.4px;top:1.6px">レンダー</div>
<div class="t" style="left:101.5px;top:1.6px">ウィンドウ</div>
<div class="t" style="left:138.4px;top:1.6px">ヘルプ</div>
<div class="a" style="left:169.5px;top:2.3px;width:39.8px;height:10.7px;background:#303030;border-radius:2px 2px 0 0"></div>
<div class="t" style="left:175px;top:1.9px;color:#fff">レイアウト</div>
<div class="t" style="left:214.6px;top:1.9px;color:#b8b8b8">モデリング</div>
<div class="t" style="left:254.2px;top:1.9px;color:#b8b8b8">スカルプト</div>
<div class="t" style="left:294.6px;top:1.9px;color:#b8b8b8"><span class="l">UV</span>編集</div>
<div class="t" style="left:325.4px;top:1.9px;color:#b8b8b8">テクスチャペイント</div>
<div class="t" style="left:389.2px;top:1.9px;color:#b8b8b8">シェーディング</div>
<div class="t" style="left:440.8px;top:1.9px;color:#b8b8b8">アニメーション</div>
<div class="t" style="left:492.2px;top:1.9px;color:#b8b8b8">レンダリング</div>
<div class="t" style="left:538.8px;top:1.9px;color:#b8b8b8">コンポジティング</div>
<div class="t" style="left:595.8px;top:1.9px;color:#b8b8b8">ジオメトリノード</div>
<div class="t" style="left:653.6px;top:1.9px;color:#b8b8b8">スクリプト作成</div>
<svg width="6" height="6" viewBox="0 0 6 6" style="left:702.2px;top:4.3px"><path d="M3 0.6V5.4M0.6 3H5.4" stroke="#b8b8b8" stroke-width="0.7"/></svg>
<!-- scene selector -->
<div class="a" style="left:845px;top:1.4px;width:16px;height:9.2px;background:#2b2b2b;border-radius:2px 0 0 2px"></div>
<div class="a" style="left:861.4px;top:1.4px;width:52.8px;height:9.2px;background:#1d1d1d"></div>
<div class="a" style="left:914.6px;top:1.4px;width:10.8px;height:9.2px;background:#4c4c4c"></div>
<div class="a" style="left:925.8px;top:1.4px;width:9.8px;height:9.2px;background:#2b2b2b;border-radius:0 2px 2px 0"></div>
<svg width="8" height="8" viewBox="0 0 16 16" style="left:846.6px;top:2px"><path d="M4.5 1.5L7.5 11H1.5Z" fill="#dcdcdc"/><circle cx="10.3" cy="10.6" r="3.4" fill="none" stroke="#dcdcdc" stroke-width="1.5"/><circle cx="11.5" cy="3.2" r="1.6" fill="#dcdcdc"/></svg>
<svg width="4.6" height="3.2" viewBox="0 0 10 7" style="left:855.4px;top:4.6px"><path d="M1.4 1.4L5 5.2L8.6 1.4" stroke="#d0d0d0" stroke-width="1.6" fill="none"/></svg>
<div class="t l" style="left:865px;top:1.6px">Scene</div>
<svg width="7" height="7" viewBox="0 0 14 14" style="left:904.6px;top:1.9px"><path d="M8.5 1.5L12.5 5.5L10.5 6L8 8.5L7.6 11.2L2.8 6.4L5.5 6L8 3.5ZM5 9L1.2 12.8" stroke="#8a8a8a" stroke-width="1.3" fill="none" stroke-linejoin="round"/></svg>
<svg width="8" height="8" viewBox="0 0 16 16" style="left:916px;top:2px"><path d="M5.5 4.5V1.8H11L14 4.8V11.5H10.5" stroke="#dcdcdc" stroke-width="1.4" fill="none"/><rect x="2" y="4.8" width="8.3" height="9.4" fill="none" stroke="#dcdcdc" stroke-width="1.4"/></svg>
<svg width="6" height="6" viewBox="0 0 6 6" style="left:927.7px;top:3px"><path d="M1 1L5 5M5 1L1 5" stroke="#555" stroke-width="0.8"/></svg>
<!-- view layer selector -->
<div class="a" style="left:938.8px;top:1.4px;width:16.2px;height:9.2px;background:#2b2b2b;border-radius:2px 0 0 2px"></div>
<div class="a" style="left:955.4px;top:1.4px;width:42.4px;height:9.2px;background:#1d1d1d"></div>
<div class="a" style="left:998.2px;top:1.4px;width:10.8px;height:9.2px;background:#4c4c4c"></div>
<div class="a" style="left:1009.4px;top:1.4px;width:10.2px;height:9.2px;background:#2b2b2b;border-radius:0 2px 2px 0"></div>
<svg width="8" height="8" viewBox="0 0 16 16" style="left:940.6px;top:2px"><rect x="1.5" y="4.5" width="10" height="10" rx="1.5" fill="#8a8a8a"/><rect x="4.3" y="1.7" width="10" height="10" rx="1.5" fill="#2b2b2b" stroke="#dcdcdc" stroke-width="1.3"/><path d="M6.5 9.5L9.3 4.8L12.2 9.5Z" fill="#dcdcdc"/></svg>
<svg width="4.6" height="3.2" viewBox="0 0 10 7" style="left:949.4px;top:4.6px"><path d="M1.4 1.4L5 5.2L8.6 1.4" stroke="#d0d0d0" stroke-width="1.6" fill="none"/></svg>
<div class="t l" style="left:959.8px;top:1.6px">ViewLayer</div>
<svg width="8" height="8" viewBox="0 0 16 16" style="left:999.6px;top:2px"><path d="M5.5 4.5V1.8H11L14 4.8V11.5H10.5" stroke="#dcdcdc" stroke-width="1.4" fill="none"/><rect x="2" y="4.8" width="8.3" height="9.4" fill="none" stroke="#dcdcdc" stroke-width="1.4"/></svg>
<svg width="6" height="6" viewBox="0 0 6 6" style="left:1011.5px;top:3px"><path d="M1 1L5 5M5 1L1 5" stroke="#555" stroke-width="0.8"/></svg>
</div>

<svg width="7" height="9" viewBox="0 0 14 18" style="left:4.90px;top:526.90px"><path d="M1.5 1.5H6.6V8.4H1.5Z" fill="#b8b8b8"/><rect x="1.2" y="1.2" width="11.6" height="15.6" rx="3.2" fill="none" stroke="#c4c4c4" stroke-width="1.5"/></svg>
<div class="t" style="left:13.70px;top:527.30px;color:#b4b4b4;">選択</div>
<svg width="7" height="9" viewBox="0 0 14 18" style="left:30.90px;top:526.90px"><rect x="5.2" y="3" width="3.6" height="6" rx="0.8" fill="#d0d0d0"/><rect x="1.2" y="1.2" width="11.6" height="15.6" rx="3.2" fill="none" stroke="#c4c4c4" stroke-width="1.5"/></svg>
<div class="t" style="left:40.00px;top:527.30px;color:#b4b4b4;">ビューを回転</div>
<svg width="7" height="9" viewBox="0 0 14 18" style="left:80.30px;top:526.90px"><path d="M7.4 1.5H12.5V8.4H7.4Z" fill="#b8b8b8"/><rect x="1.2" y="1.2" width="11.6" height="15.6" rx="3.2" fill="none" stroke="#c4c4c4" stroke-width="1.5"/></svg>
<div class="t" style="left:88.90px;top:527.30px;color:#b4b4b4;">メニュー呼び出し</div>
<div class="t l" style="right:6px;top:527.8px;color:#8a8a8a;font-size:5.8px">4.3.2</div>
</div></body></html>
